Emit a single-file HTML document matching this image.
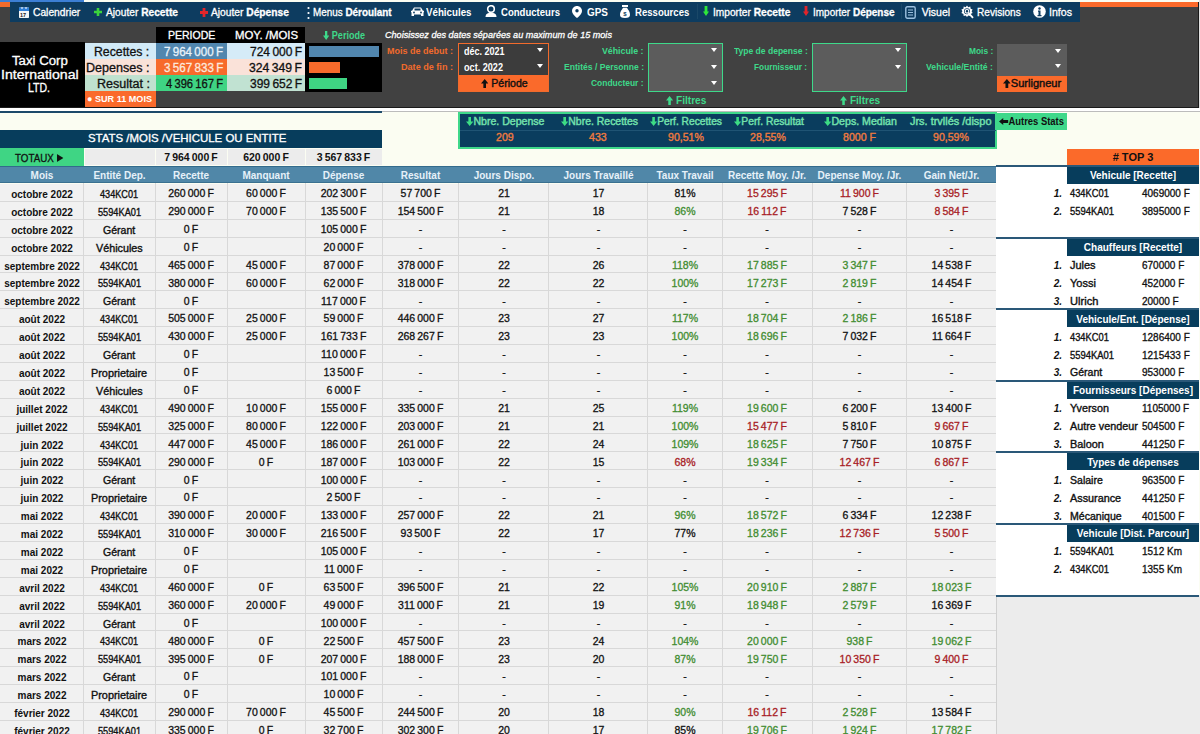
<!DOCTYPE html><html><head><meta charset="utf-8"><style>*{margin:0;padding:0;box-sizing:border-box}
html,body{width:1200px;height:734px;overflow:hidden}
body{position:relative;background:#fbfdf2;font-family:"Liberation Sans",sans-serif}
.a{position:absolute}
.t{position:absolute;white-space:nowrap}
</style></head><body>
<div class="a" style="left:0px;top:0px;width:84px;height:2px;background:#3c7fd4;"></div>
<div class="a" style="left:0px;top:2px;width:1199px;height:106px;background:#414141;"></div>
<div class="a" style="left:0px;top:2px;width:10px;height:5px;background:#f26b2c;"></div>
<div class="a" style="left:1080px;top:2px;width:119px;height:5px;background:#fb6a2a;"></div>
<div class="a" style="left:1199px;top:0px;width:1px;height:110px;background:#e0e0e0;"></div>
<div class="a" style="left:10px;top:1.5px;width:1070px;height:20px;background:#0d3c60;"></div>
<svg class="a" style="left:19px;top:7px" width="10" height="11" viewBox="0 0 10 11"><rect x="0" y="0.5" width="10" height="10.5" rx="0.8" fill="#f4f6f8"/><rect x="0" y="0.5" width="10" height="3.5" fill="#2f7fd8"/><rect x="2.5" y="0" width="1" height="2" fill="#fff"/><rect x="6.5" y="0" width="1" height="2" fill="#fff"/><text x="1" y="10" font-size="5.5" font-family="Liberation Sans" font-weight="bold" fill="#222">17</text></svg>
<svg class="a" style="left:94px;top:8px" width="8" height="8" viewBox="0 0 8 8"><path d="M2.7 0h2.6v2.7H8v2.6H5.3V8H2.7V5.3H0V2.7h2.7z" fill="#3bd43c"/></svg>
<svg class="a" style="left:200px;top:8px" width="8" height="9" viewBox="0 0 8 9"><path d="M2.6 0h2.8v3.1H8v2.8H5.4V9H2.6V5.9H0V3.1h2.6z" fill="#e2262b"/></svg>
<svg class="a" style="left:307px;top:6px" width="3" height="14" viewBox="0 0 3 14"><circle cx="1.5" cy="2" r="1.1" fill="#fff"/><circle cx="1.5" cy="7" r="1.1" fill="#fff"/><circle cx="1.5" cy="12" r="1.1" fill="#fff"/></svg>
<svg class="a" style="left:411px;top:7px" width="13" height="9" viewBox="0 0 13 9"><path d="M3 0.5h7l2 3.2h1v1.5h-0.5V9h-2.5V7.5H3V9H0.5V5.2H0V3.7h1z" fill="#fff"/><rect x="3.5" y="1.5" width="6" height="2" fill="#0d3c60"/><circle cx="3" cy="5.5" r="0.9" fill="#0d3c60"/><circle cx="10" cy="5.5" r="0.9" fill="#0d3c60"/></svg>
<svg class="a" style="left:485px;top:5px" width="12" height="12" viewBox="0 0 12 12"><circle cx="6" cy="4" r="3.3" fill="none" stroke="#fff" stroke-width="1.6"/><path d="M0.5 12c0-3.2 2.3-4.3 5.5-4.3s5.5 1.1 5.5 4.3z" fill="#fff"/></svg>
<svg class="a" style="left:572px;top:6px" width="10" height="12" viewBox="0 0 10 12"><path d="M5 0C2.2 0 0 2.2 0 5c0 3.5 5 7 5 7s5-3.5 5-7C10 2.2 7.8 0 5 0z" fill="#fff"/><circle cx="5" cy="4.8" r="1.7" fill="#0d3c60"/></svg>
<svg class="a" style="left:620px;top:5px" width="10" height="13" viewBox="0 0 10 13"><rect x="2" y="0" width="6" height="2" fill="#fff"/><path d="M3 2.8h4l1 1.6C9.5 6 10 8 10 10c0 2-1.5 3-5 3S0 12 0 10c0-2 .5-4 2-5.6z" fill="#fff"/><text x="3.3" y="11" font-size="6" font-family="Liberation Sans" font-weight="bold" fill="#0d3c60">$</text></svg>
<div class="a" style="left:697px;top:4px;width:1px;height:15px;background:#1a4868;"></div>
<svg class="a" style="left:703px;top:6px" width="6" height="10" viewBox="0 0 6 10"><path d="M1.6 0h2.8v5.6H6L3 10 0 5.6h1.6z" fill="#2ee83a"/></svg>
<svg class="a" style="left:802.5px;top:6px" width="6" height="10" viewBox="0 0 6 10"><path d="M1.6 0h2.8v5.6H6L3 10 0 5.6h1.6z" fill="#e0242a"/></svg>
<div class="a" style="left:901px;top:4px;width:1px;height:15px;background:#1a4868;"></div>
<svg class="a" style="left:905px;top:6px" width="11" height="13" viewBox="0 0 11 13"><rect x="0.8" y="0.8" width="9.4" height="11.4" rx="1.5" fill="none" stroke="#9cc0de" stroke-width="1.4"/><path d="M3 4h5M3 6.5h5M3 9h5" stroke="#9cc0de" stroke-width="1"/></svg>
<svg class="a" style="left:960px;top:5px" width="14" height="14" viewBox="0 0 14 14"><path d="M7 0.5l1.3 1.7 2-.6.3 2.1 2 .8-1 1.8 1 1.8-2 .8-.3 2.1-2-.6L7 12.1 5.7 10.4l-2 .6-.3-2.1-2-.8 1-1.8-1-1.8 2-.8.3-2.1 2 .6z" fill="#fff"/><circle cx="7" cy="6.3" r="3" fill="#0d3c60"/><circle cx="7" cy="6.3" r="1.8" fill="none" stroke="#fff" stroke-width="1.1"/><path d="M8.5 7.8l4.5 5" stroke="#fff" stroke-width="1.8"/></svg>
<svg class="a" style="left:1033px;top:5px" width="13" height="13" viewBox="0 0 13 13"><circle cx="6.5" cy="6.5" r="6.3" fill="#fff"/><circle cx="6.5" cy="3.5" r="1.2" fill="#0d3c60"/><path d="M5 5.5h2.5v4.5H8.5v1.2h-4V10h1V6.7H5z" fill="#0d3c60"/></svg>
<div class="a" style="left:0px;top:42px;width:85px;height:66px;background:#000;"></div>
<div class="a" style="left:85px;top:43px;width:71px;height:16px;background:#d2eaf7;"></div>
<div class="a" style="left:85px;top:59px;width:71px;height:16px;background:#f9e2d8;"></div>
<div class="a" style="left:85px;top:75px;width:71px;height:16px;background:#bfe1cf;"></div>
<div class="a" style="left:85px;top:91px;width:71px;height:17px;background:#fa6a2b;"></div>
<div class="a" style="left:156px;top:27px;width:149px;height:16px;background:#000;"></div>
<div class="a" style="left:156px;top:43px;width:71px;height:16px;background:#5186ae;"></div>
<div class="a" style="left:227px;top:43px;width:78px;height:16px;background:#d5ebf8;"></div>
<div class="a" style="left:156px;top:59px;width:71px;height:16px;background:#f76a2b;"></div>
<div class="a" style="left:227px;top:59px;width:78px;height:16px;background:#fae2d9;"></div>
<div class="a" style="left:156px;top:75px;width:71px;height:16px;background:#3fd483;"></div>
<div class="a" style="left:227px;top:75px;width:78px;height:16px;background:#c1e2d2;"></div>
<div class="a" style="left:305px;top:43px;width:77px;height:49px;background:#000;"></div>
<div class="a" style="left:309px;top:46px;width:70px;height:11px;background:#5186ae;"></div>
<div class="a" style="left:309px;top:62px;width:31px;height:11px;background:#f76a2b;"></div>
<div class="a" style="left:309px;top:78px;width:38px;height:11px;background:#3fd483;"></div>
<div class="a" style="left:458px;top:43px;width:91px;height:49px;background:#3c3c3c;border:1px solid #f26b2c"></div>
<div class="a" style="left:536.5px;top:48px;width:0;height:0;border-left:3.5px solid transparent;border-right:3.5px solid transparent;border-top:4.5px solid #fff"></div>
<div class="a" style="left:536.5px;top:64px;width:0;height:0;border-left:3.5px solid transparent;border-right:3.5px solid transparent;border-top:4.5px solid #fff"></div>
<div class="a" style="left:459px;top:75px;width:89px;height:16px;background:#fa6a2b;"></div>
<div class="a" style="left:648px;top:43px;width:75px;height:49px;background:#5c5c5c;border:1px solid #3ed98a"></div>
<div class="a" style="left:710.5px;top:48px;width:0;height:0;border-left:3.5px solid transparent;border-right:3.5px solid transparent;border-top:4.5px solid #fff"></div>
<div class="a" style="left:710.5px;top:64.5px;width:0;height:0;border-left:3.5px solid transparent;border-right:3.5px solid transparent;border-top:4.5px solid #fff"></div>
<div class="a" style="left:710.5px;top:81px;width:0;height:0;border-left:3.5px solid transparent;border-right:3.5px solid transparent;border-top:4.5px solid #fff"></div>
<div class="a" style="left:812px;top:43px;width:95px;height:49px;background:#5c5c5c;border:1px solid #3ed98a"></div>
<div class="a" style="left:894.5px;top:48px;width:0;height:0;border-left:3.5px solid transparent;border-right:3.5px solid transparent;border-top:4.5px solid #fff"></div>
<div class="a" style="left:894.5px;top:64.5px;width:0;height:0;border-left:3.5px solid transparent;border-right:3.5px solid transparent;border-top:4.5px solid #fff"></div>
<div class="a" style="left:997px;top:44px;width:70px;height:32px;background:#5c5c5c;"></div>
<div class="a" style="left:1054.5px;top:48.5px;width:0;height:0;border-left:3.5px solid transparent;border-right:3.5px solid transparent;border-top:4.5px solid #fff"></div>
<div class="a" style="left:1054.5px;top:64.3px;width:0;height:0;border-left:3.5px solid transparent;border-right:3.5px solid transparent;border-top:4.5px solid #fff"></div>
<div class="a" style="left:997px;top:76px;width:70px;height:16px;background:#fa6a2b;"></div>
<div class="a" style="left:0px;top:107px;width:1199px;height:1px;background:#1a1a1a;"></div>
<div class="a" style="left:1198px;top:2px;width:1px;height:106px;background:#1a1a1a;"></div>
<div class="a" style="left:0px;top:108px;width:1200px;height:2.5px;background:#ffffff;"></div>
<div class="a" style="left:382px;top:110.5px;width:818px;height:1.5px;background:#bcbcbc;"></div>
<div class="a" style="left:0px;top:111px;width:382px;height:1.8px;background:#1c4a6a;"></div>
<div class="a" style="left:458px;top:112px;width:539px;height:36.5px;background:#0a3d5e;border:2px solid #3fd88a"></div>
<div class="a" style="left:460px;top:129.5px;width:536px;height:1px;background:#1f5474;"></div>
<div class="a" style="left:997px;top:112.5px;width:70px;height:17px;background:#3fd88a;"></div>
<div class="a" style="left:0px;top:130px;width:382px;height:18px;background:#073d5c;"></div>
<div class="a" style="left:0px;top:148px;width:84px;height:18px;background:#3fd584;"></div>
<div class="a" style="left:85px;top:149px;width:70px;height:16px;background:#ececec;"></div>
<div class="a" style="left:156px;top:149px;width:71px;height:16px;background:#ececec;"></div>
<div class="a" style="left:228px;top:149px;width:77px;height:16px;background:#ececec;"></div>
<div class="a" style="left:306px;top:149px;width:76px;height:16px;background:#ececec;"></div>
<div class="a" style="left:0px;top:166px;width:996px;height:17px;background:#5087a8;"></div>
<div class="a" style="left:0px;top:166px;width:996px;height:1px;background:#336b8c;"></div>
<div class="a" style="left:0px;top:182px;width:996px;height:1px;background:#3a7090;"></div>
<div class="a" style="left:0px;top:184px;width:996px;height:18px;background:#f1f1f1;"></div>
<div class="a" style="left:0px;top:201px;width:996px;height:1px;background:#d8d8d8;"></div>
<div class="a" style="left:0px;top:202px;width:996px;height:18px;background:#f1f1f1;"></div>
<div class="a" style="left:0px;top:219px;width:996px;height:1px;background:#d8d8d8;"></div>
<div class="a" style="left:0px;top:220px;width:996px;height:18px;background:#f1f1f1;"></div>
<div class="a" style="left:0px;top:237px;width:996px;height:1px;background:#d8d8d8;"></div>
<div class="a" style="left:0px;top:238px;width:996px;height:18px;background:#f1f1f1;"></div>
<div class="a" style="left:0px;top:255px;width:996px;height:1px;background:#d8d8d8;"></div>
<div class="a" style="left:0px;top:256px;width:996px;height:17px;background:#f1f1f1;"></div>
<div class="a" style="left:0px;top:272px;width:996px;height:1px;background:#d8d8d8;"></div>
<div class="a" style="left:0px;top:273px;width:996px;height:18px;background:#f1f1f1;"></div>
<div class="a" style="left:0px;top:290px;width:996px;height:1px;background:#d8d8d8;"></div>
<div class="a" style="left:0px;top:291px;width:996px;height:18px;background:#f1f1f1;"></div>
<div class="a" style="left:0px;top:308px;width:996px;height:1px;background:#d8d8d8;"></div>
<div class="a" style="left:0px;top:309px;width:996px;height:18px;background:#f1f1f1;"></div>
<div class="a" style="left:0px;top:326px;width:996px;height:1px;background:#d8d8d8;"></div>
<div class="a" style="left:0px;top:327px;width:996px;height:18px;background:#f1f1f1;"></div>
<div class="a" style="left:0px;top:344px;width:996px;height:1px;background:#d8d8d8;"></div>
<div class="a" style="left:0px;top:345px;width:996px;height:18px;background:#f1f1f1;"></div>
<div class="a" style="left:0px;top:362px;width:996px;height:1px;background:#d8d8d8;"></div>
<div class="a" style="left:0px;top:363px;width:996px;height:18px;background:#f1f1f1;"></div>
<div class="a" style="left:0px;top:380px;width:996px;height:1px;background:#d8d8d8;"></div>
<div class="a" style="left:0px;top:381px;width:996px;height:18px;background:#f1f1f1;"></div>
<div class="a" style="left:0px;top:398px;width:996px;height:1px;background:#d8d8d8;"></div>
<div class="a" style="left:0px;top:399px;width:996px;height:18px;background:#f1f1f1;"></div>
<div class="a" style="left:0px;top:416px;width:996px;height:1px;background:#d8d8d8;"></div>
<div class="a" style="left:0px;top:417px;width:996px;height:17px;background:#f1f1f1;"></div>
<div class="a" style="left:0px;top:433px;width:996px;height:1px;background:#d8d8d8;"></div>
<div class="a" style="left:0px;top:434px;width:996px;height:18px;background:#f1f1f1;"></div>
<div class="a" style="left:0px;top:451px;width:996px;height:1px;background:#d8d8d8;"></div>
<div class="a" style="left:0px;top:452px;width:996px;height:18px;background:#f1f1f1;"></div>
<div class="a" style="left:0px;top:469px;width:996px;height:1px;background:#d8d8d8;"></div>
<div class="a" style="left:0px;top:470px;width:996px;height:18px;background:#f1f1f1;"></div>
<div class="a" style="left:0px;top:487px;width:996px;height:1px;background:#d8d8d8;"></div>
<div class="a" style="left:0px;top:488px;width:996px;height:18px;background:#f1f1f1;"></div>
<div class="a" style="left:0px;top:505px;width:996px;height:1px;background:#d8d8d8;"></div>
<div class="a" style="left:0px;top:506px;width:996px;height:18px;background:#f1f1f1;"></div>
<div class="a" style="left:0px;top:523px;width:996px;height:1px;background:#d8d8d8;"></div>
<div class="a" style="left:0px;top:524px;width:996px;height:18px;background:#f1f1f1;"></div>
<div class="a" style="left:0px;top:541px;width:996px;height:1px;background:#d8d8d8;"></div>
<div class="a" style="left:0px;top:542px;width:996px;height:18px;background:#f1f1f1;"></div>
<div class="a" style="left:0px;top:559px;width:996px;height:1px;background:#d8d8d8;"></div>
<div class="a" style="left:0px;top:560px;width:996px;height:18px;background:#f1f1f1;"></div>
<div class="a" style="left:0px;top:577px;width:996px;height:1px;background:#d8d8d8;"></div>
<div class="a" style="left:0px;top:578px;width:996px;height:18px;background:#f1f1f1;"></div>
<div class="a" style="left:0px;top:595px;width:996px;height:1px;background:#d8d8d8;"></div>
<div class="a" style="left:0px;top:596px;width:996px;height:18px;background:#f1f1f1;"></div>
<div class="a" style="left:0px;top:613px;width:996px;height:1px;background:#d8d8d8;"></div>
<div class="a" style="left:0px;top:614px;width:996px;height:17px;background:#f1f1f1;"></div>
<div class="a" style="left:0px;top:630px;width:996px;height:1px;background:#d8d8d8;"></div>
<div class="a" style="left:0px;top:631px;width:996px;height:18px;background:#f1f1f1;"></div>
<div class="a" style="left:0px;top:648px;width:996px;height:1px;background:#d8d8d8;"></div>
<div class="a" style="left:0px;top:649px;width:996px;height:18px;background:#f1f1f1;"></div>
<div class="a" style="left:0px;top:666px;width:996px;height:1px;background:#d8d8d8;"></div>
<div class="a" style="left:0px;top:667px;width:996px;height:18px;background:#f1f1f1;"></div>
<div class="a" style="left:0px;top:684px;width:996px;height:1px;background:#d8d8d8;"></div>
<div class="a" style="left:0px;top:685px;width:996px;height:18px;background:#f1f1f1;"></div>
<div class="a" style="left:0px;top:702px;width:996px;height:1px;background:#d8d8d8;"></div>
<div class="a" style="left:0px;top:703px;width:996px;height:18px;background:#f1f1f1;"></div>
<div class="a" style="left:0px;top:720px;width:996px;height:1px;background:#d8d8d8;"></div>
<div class="a" style="left:0px;top:721px;width:996px;height:18px;background:#f1f1f1;"></div>
<div class="a" style="left:0px;top:738px;width:996px;height:1px;background:#d8d8d8;"></div>
<div class="a" style="left:83px;top:183px;width:1px;height:551px;background:#d8d8d8;"></div>
<div class="a" style="left:155px;top:183px;width:1px;height:551px;background:#d8d8d8;"></div>
<div class="a" style="left:227px;top:183px;width:1px;height:551px;background:#d8d8d8;"></div>
<div class="a" style="left:305px;top:183px;width:1px;height:551px;background:#d8d8d8;"></div>
<div class="a" style="left:382px;top:183px;width:1px;height:551px;background:#d8d8d8;"></div>
<div class="a" style="left:458px;top:183px;width:1px;height:551px;background:#d8d8d8;"></div>
<div class="a" style="left:548px;top:183px;width:1px;height:551px;background:#d8d8d8;"></div>
<div class="a" style="left:647px;top:183px;width:1px;height:551px;background:#d8d8d8;"></div>
<div class="a" style="left:722px;top:183px;width:1px;height:551px;background:#d8d8d8;"></div>
<div class="a" style="left:812px;top:183px;width:1px;height:551px;background:#d8d8d8;"></div>
<div class="a" style="left:906px;top:183px;width:1px;height:551px;background:#d8d8d8;"></div>
<div class="a" style="left:996px;top:166px;width:203px;height:429px;background:#fff;"></div>
<div class="a" style="left:996px;top:595px;width:204px;height:139px;background:#ececec;"></div>
<div class="a" style="left:996px;top:595px;width:1px;height:139px;background:#d0d0d0;"></div>
<div class="a" style="left:1067px;top:148.5px;width:132px;height:17.5px;background:#fb6a2a;"></div>
<div class="a" style="left:996px;top:165px;width:203px;height:1.5px;background:#2a5878;"></div>
<div class="a" style="left:1067px;top:167px;width:132px;height:17px;background:#073d5c;"></div>
<div class="a" style="left:996px;top:237px;width:203px;height:1.5px;background:#2a5878;"></div>
<div class="a" style="left:1067px;top:239px;width:132px;height:17px;background:#073d5c;"></div>
<div class="a" style="left:996px;top:308px;width:203px;height:1.5px;background:#2a5878;"></div>
<div class="a" style="left:1067px;top:310px;width:132px;height:17px;background:#073d5c;"></div>
<div class="a" style="left:996px;top:380px;width:203px;height:1.5px;background:#2a5878;"></div>
<div class="a" style="left:1067px;top:382px;width:132px;height:17px;background:#073d5c;"></div>
<div class="a" style="left:996px;top:451px;width:203px;height:1.5px;background:#2a5878;"></div>
<div class="a" style="left:1067px;top:453px;width:132px;height:17px;background:#073d5c;"></div>
<div class="a" style="left:996px;top:523px;width:203px;height:1.5px;background:#2a5878;"></div>
<div class="a" style="left:1067px;top:525px;width:132px;height:17px;background:#073d5c;"></div>
<div class="a" style="left:996px;top:595px;width:203px;height:2px;background:#2a5878;"></div>
<div class="t" style="left:33.40px;top:6.32px;font-size:10.5px;line-height:12.07px;color:#fff;-webkit-text-stroke:0.3px #fff;transform:scaleX(0.976);transform-origin:0 0;">Calendrier</div>
<div class="t" style="left:106.00px;top:6.32px;font-size:10.5px;line-height:12.07px;color:#fff;-webkit-text-stroke:0.3px #fff;transform:scaleX(0.971);transform-origin:0 0;">Ajouter <b>Recette</b></div>
<div class="t" style="left:211.00px;top:6.32px;font-size:10.5px;line-height:12.07px;color:#fff;-webkit-text-stroke:0.3px #fff;transform:scaleX(0.975);transform-origin:0 0;">Ajouter <b>Dépense</b></div>
<div class="t" style="left:312.50px;top:6.32px;font-size:10.5px;line-height:12.07px;color:#fff;-webkit-text-stroke:0.3px #fff;transform:scaleX(0.941);transform-origin:0 0;">Menus <b>Déroulant</b></div>
<div class="t" style="left:425.80px;top:6.32px;font-size:10.5px;line-height:12.07px;color:#fff;font-weight:bold;transform:scaleX(0.928);transform-origin:0 0;">Véhicules</div>
<div class="t" style="left:501.00px;top:6.32px;font-size:10.5px;line-height:12.07px;color:#fff;font-weight:bold;transform:scaleX(0.911);transform-origin:0 0;">Conducteurs</div>
<div class="t" style="left:586.70px;top:6.32px;font-size:10.5px;line-height:12.07px;color:#fff;font-weight:bold;transform:scaleX(0.946);transform-origin:0 0;">GPS</div>
<div class="t" style="left:635.00px;top:6.32px;font-size:10.5px;line-height:12.07px;color:#fff;font-weight:bold;transform:scaleX(0.912);transform-origin:0 0;">Ressources</div>
<div class="t" style="left:713.30px;top:6.32px;font-size:10.5px;line-height:12.07px;color:#fff;-webkit-text-stroke:0.3px #fff;transform:scaleX(0.968);transform-origin:0 0;">Importer <b>Recette</b></div>
<div class="t" style="left:812.70px;top:6.32px;font-size:10.5px;line-height:12.07px;color:#fff;-webkit-text-stroke:0.3px #fff;transform:scaleX(0.951);transform-origin:0 0;">Importer <b>Dépense</b></div>
<div class="t" style="left:921.70px;top:6.32px;font-size:10.5px;line-height:12.07px;color:#fff;-webkit-text-stroke:0.3px #fff;">Visuel</div>
<div class="t" style="left:977.30px;top:6.32px;font-size:10.5px;line-height:12.07px;color:#fff;-webkit-text-stroke:0.3px #fff;transform:scaleX(0.960);transform-origin:0 0;">Revisions</div>
<div class="t" style="left:1049.30px;top:6.32px;font-size:10.5px;line-height:12.07px;color:#fff;-webkit-text-stroke:0.3px #fff;transform:scaleX(1.010);transform-origin:0 0;">Infos</div>
<div class="t" style="left:11.60px;top:54.94px;font-size:12px;line-height:13.80px;color:#fff;-webkit-text-stroke:0.3px #fff;transform:scaleX(1.101);transform-origin:0 0;">Taxi Corp</div>
<div class="t" style="left:0.70px;top:68.94px;font-size:12px;line-height:13.80px;color:#fff;-webkit-text-stroke:0.3px #fff;transform:scaleX(1.175);transform-origin:0 0;">International</div>
<div class="t" style="left:28.00px;top:81.94px;font-size:12px;line-height:13.80px;color:#fff;-webkit-text-stroke:0.3px #fff;transform:scaleX(0.876);transform-origin:0 0;">LTD.</div>
<div class="t" style="left:94.00px;top:45.94px;font-size:12px;line-height:13.80px;color:#111;-webkit-text-stroke:0.3px #111;transform:scaleX(1.022);transform-origin:0 0;">Recettes :</div>
<div class="t" style="left:86.00px;top:61.94px;font-size:12px;line-height:13.80px;color:#111;-webkit-text-stroke:0.3px #111;transform:scaleX(1.046);transform-origin:0 0;">Depenses :</div>
<div class="t" style="left:96.50px;top:77.94px;font-size:12px;line-height:13.80px;color:#111;-webkit-text-stroke:0.3px #111;transform:scaleX(1.045);transform-origin:0 0;">Resultat :</div>
<div class="t" style="left:87.00px;top:94.25px;font-size:9.5px;line-height:10.92px;color:#fff;font-weight:bold;transform:scaleX(0.955);transform-origin:0 0;">● SUR 11 MOIS</div>
<div class="t" style="left:168.00px;top:29.32px;font-size:10.5px;line-height:12.07px;color:#fff;-webkit-text-stroke:0.3px #fff;">PERIODE</div>
<div class="t" style="left:235.00px;top:29.32px;font-size:10.5px;line-height:12.07px;color:#fff;-webkit-text-stroke:0.3px #fff;transform:scaleX(1.083);transform-origin:0 0;">MOY. /MOIS</div>
<div class="t" style="left:164.00px;top:45.94px;font-size:12px;line-height:13.80px;color:#e8f2fa;-webkit-text-stroke:0.3px #e8f2fa;transform:scaleX(0.963);transform-origin:0 0;">7 964 000 F</div>
<div class="t" style="left:250.00px;top:45.94px;font-size:12px;line-height:13.80px;color:#111;-webkit-text-stroke:0.3px #111;">724 000 F</div>
<div class="t" style="left:163.60px;top:61.94px;font-size:12px;line-height:13.80px;color:#fde8dc;-webkit-text-stroke:0.3px #fde8dc;transform:scaleX(0.970);transform-origin:0 0;">3 567 833 F</div>
<div class="t" style="left:249.00px;top:61.94px;font-size:12px;line-height:13.80px;color:#111;-webkit-text-stroke:0.3px #111;transform:scaleX(1.016);transform-origin:0 0;">324 349 F</div>
<div class="t" style="left:166.00px;top:77.94px;font-size:12px;line-height:13.80px;color:#111;-webkit-text-stroke:0.3px #111;transform:scaleX(0.930);transform-origin:0 0;">4 396 167 F</div>
<div class="t" style="left:250.00px;top:77.94px;font-size:12px;line-height:13.80px;color:#111;-webkit-text-stroke:0.3px #111;">399 652 F</div>
<div class="t" style="left:323.00px;top:29.79px;font-size:10px;line-height:11.50px;color:#3ed98a;font-weight:bold;transform:scaleX(0.904);transform-origin:0 0;"><svg width="7" height="9" viewBox="0 0 7 9" style="vertical-align:-1px"><path d="M2.24 0h2.52v4.50H7L3.50 9L0 4.50h2.24z" fill="#3ed98a"/></svg> Periode</div>
<div class="t" style="left:385.00px;top:30.25px;font-size:9.5px;line-height:10.92px;color:#fff;-webkit-text-stroke:0.3px #fff;font-style:italic;transform:scaleX(0.955);transform-origin:0 0;">Choisissez des dates séparées au maximum de 15 mois</div>
<div class="t" style="left:387.00px;top:46.25px;font-size:9.5px;line-height:10.92px;color:#f26b2c;font-weight:bold;transform:scaleX(0.947);transform-origin:0 0;">Mois de debut :</div>
<div class="t" style="left:401.00px;top:62.25px;font-size:9.5px;line-height:10.92px;color:#f26b2c;font-weight:bold;transform:scaleX(0.956);transform-origin:0 0;">Date de fin :</div>
<div class="t" style="left:464.00px;top:45.78px;font-size:10px;line-height:11.50px;color:#fff;font-weight:bold;transform:scaleX(0.901);transform-origin:0 0;">déc. 2021</div>
<div class="t" style="left:464.00px;top:61.78px;font-size:10px;line-height:11.50px;color:#fff;font-weight:bold;transform:scaleX(0.911);transform-origin:0 0;">oct. 2022</div>
<div class="t" style="left:480.60px;top:77.78px;font-size:10px;line-height:11.50px;color:#111;-webkit-text-stroke:0.4px #111;transform:scaleX(1.055);transform-origin:0 0;"><svg width="7" height="9" viewBox="0 0 7 9" style="vertical-align:-1px"><path d="M2.24 9h2.52v-4.50H7L3.50 0L0 4.50h2.24z" fill="#111"/></svg> Période</div>
<div class="t" style="left:602.00px;top:46.25px;font-size:9.5px;line-height:10.92px;color:#3ed98a;font-weight:bold;transform:scaleX(0.925);transform-origin:0 0;">Véhicule :</div>
<div class="t" style="left:563.60px;top:62.25px;font-size:9.5px;line-height:10.92px;color:#3ed98a;font-weight:bold;transform:scaleX(0.902);transform-origin:0 0;">Entités / Personne :</div>
<div class="t" style="left:591.00px;top:78.25px;font-size:9.5px;line-height:10.92px;color:#3ed98a;font-weight:bold;transform:scaleX(0.888);transform-origin:0 0;">Conducteur :</div>
<div class="t" style="left:665.60px;top:94.78px;font-size:10px;line-height:11.50px;color:#3ed98a;font-weight:bold;transform:scaleX(1.015);transform-origin:0 0;"><svg width="7" height="9" viewBox="0 0 7 9" style="vertical-align:-1px"><path d="M2.24 9h2.52v-4.50H7L3.50 0L0 4.50h2.24z" fill="#3ed98a"/></svg> Filtres</div>
<div class="t" style="left:733.60px;top:46.25px;font-size:9.5px;line-height:10.92px;color:#3ed98a;font-weight:bold;transform:scaleX(0.897);transform-origin:0 0;">Type de depense :</div>
<div class="t" style="left:754.00px;top:62.25px;font-size:9.5px;line-height:10.92px;color:#3ed98a;font-weight:bold;transform:scaleX(0.873);transform-origin:0 0;">Fournisseur :</div>
<div class="t" style="left:839.80px;top:94.78px;font-size:10px;line-height:11.50px;color:#3ed98a;font-weight:bold;transform:scaleX(1.010);transform-origin:0 0;"><svg width="7" height="9" viewBox="0 0 7 9" style="vertical-align:-1px"><path d="M2.24 9h2.52v-4.50H7L3.50 0L0 4.50h2.24z" fill="#3ed98a"/></svg> Filtres</div>
<div class="t" style="left:968.80px;top:46.25px;font-size:9.5px;line-height:10.92px;color:#3ed98a;font-weight:bold;transform:scaleX(0.882);transform-origin:0 0;">Mois :</div>
<div class="t" style="left:926.00px;top:62.25px;font-size:9.5px;line-height:10.92px;color:#3ed98a;font-weight:bold;transform:scaleX(0.913);transform-origin:0 0;">Vehicule/Entité :</div>
<div class="t" style="left:1003.00px;top:77.78px;font-size:10px;line-height:11.50px;color:#111;-webkit-text-stroke:0.4px #111;transform:scaleX(1.107);transform-origin:0 0;"><svg width="7" height="9" viewBox="0 0 7 9" style="vertical-align:-1px"><path d="M2.24 9h2.52v-4.50H7L3.50 0L0 4.50h2.24z" fill="#111"/></svg>Surligneur</div>
<div class="t" style="left:466.00px;top:115.78px;font-size:10px;line-height:11.50px;color:#74e2ad;-webkit-text-stroke:0.4px #74e2ad;transform:scaleX(1.057);transform-origin:0 0;"><svg width="7" height="9" viewBox="0 0 7 9" style="vertical-align:-1px"><path d="M2.24 0h2.52v4.50H7L3.50 9L0 4.50h2.24z" fill="#3ddc84"/></svg>Nbre. Depense</div>
<div class="t" style="left:496.17px;top:131.40px;font-size:11.5px;line-height:13.22px;color:#ee7a3e;-webkit-text-stroke:0.4px #ee7a3e;transform:scaleX(0.920);transform-origin:0 0;">209</div>
<div class="t" style="left:560.80px;top:115.78px;font-size:10px;line-height:11.50px;color:#74e2ad;-webkit-text-stroke:0.4px #74e2ad;transform:scaleX(1.045);transform-origin:0 0;"><svg width="7" height="9" viewBox="0 0 7 9" style="vertical-align:-1px"><path d="M2.24 0h2.52v4.50H7L3.50 9L0 4.50h2.24z" fill="#3ddc84"/></svg>Nbre. Recettes</div>
<div class="t" style="left:589.17px;top:131.40px;font-size:11.5px;line-height:13.22px;color:#ee7a3e;-webkit-text-stroke:0.4px #ee7a3e;transform:scaleX(0.920);transform-origin:0 0;">433</div>
<div class="t" style="left:650.00px;top:115.78px;font-size:10px;line-height:11.50px;color:#74e2ad;-webkit-text-stroke:0.4px #74e2ad;transform:scaleX(1.023);transform-origin:0 0;"><svg width="7" height="9" viewBox="0 0 7 9" style="vertical-align:-1px"><path d="M2.24 0h2.52v4.50H7L3.50 9L0 4.50h2.24z" fill="#3ddc84"/></svg>Perf. Recettes</div>
<div class="t" style="left:667.65px;top:131.40px;font-size:11.5px;line-height:13.22px;color:#ee7a3e;-webkit-text-stroke:0.4px #ee7a3e;transform:scaleX(0.920);transform-origin:0 0;">90,51%</div>
<div class="t" style="left:733.50px;top:115.78px;font-size:10px;line-height:11.50px;color:#74e2ad;-webkit-text-stroke:0.4px #74e2ad;transform:scaleX(1.034);transform-origin:0 0;"><svg width="7" height="9" viewBox="0 0 7 9" style="vertical-align:-1px"><path d="M2.24 0h2.52v4.50H7L3.50 9L0 4.50h2.24z" fill="#3ddc84"/></svg>Perf. Resultat</div>
<div class="t" style="left:750.05px;top:131.40px;font-size:11.5px;line-height:13.22px;color:#ee7a3e;-webkit-text-stroke:0.4px #ee7a3e;transform:scaleX(0.920);transform-origin:0 0;">28,55%</div>
<div class="t" style="left:823.50px;top:115.78px;font-size:10px;line-height:11.50px;color:#74e2ad;-webkit-text-stroke:0.4px #74e2ad;transform:scaleX(1.061);transform-origin:0 0;"><svg width="7" height="9" viewBox="0 0 7 9" style="vertical-align:-1px"><path d="M2.24 0h2.52v4.50H7L3.50 9L0 4.50h2.24z" fill="#3ddc84"/></svg>Deps. Median</div>
<div class="t" style="left:843.03px;top:131.40px;font-size:11.5px;line-height:13.22px;color:#ee7a3e;-webkit-text-stroke:0.4px #ee7a3e;transform:scaleX(0.920);transform-origin:0 0;">8000 F</div>
<div class="t" style="left:910.00px;top:115.78px;font-size:10px;line-height:11.50px;color:#74e2ad;-webkit-text-stroke:0.4px #74e2ad;transform:scaleX(1.094);transform-origin:0 0;">Jrs. trvllés /dispo</div>
<div class="t" style="left:933.05px;top:131.40px;font-size:11.5px;line-height:13.22px;color:#ee7a3e;-webkit-text-stroke:0.4px #ee7a3e;transform:scaleX(0.920);transform-origin:0 0;">90,59%</div>
<div class="t" style="left:999.00px;top:115.78px;font-size:10px;line-height:11.50px;color:#111;font-weight:bold;transform:scaleX(0.943);transform-origin:0 0;"><svg width="10" height="7" viewBox="0 0 10 7" style="vertical-align:0px"><path d="M0 3.50L4.50 0v2.10H10v2.80H4.50V7z" fill="#111"/></svg>Autres Stats</div>
<div class="t" style="left:88.30px;top:131.86px;font-size:11px;line-height:12.65px;color:#fff;-webkit-text-stroke:0.3px #fff;transform:scaleX(1.039);transform-origin:0 0;">STATS /MOIS /VEHICULE OU ENTITE</div>
<div class="t" style="left:15.00px;top:151.82px;font-size:10.5px;line-height:12.07px;color:#111;-webkit-text-stroke:0.3px #111;transform:scaleX(0.931);transform-origin:0 0;">TOTAUX <svg width="7" height="8" viewBox="0 0 7 8" style="vertical-align:-0.5px"><path d="M0 0L7 4.00L0 8z" fill="#111"/></svg></div>
<div class="t" style="left:164.20px;top:151.32px;font-size:10.5px;line-height:12.07px;color:#111;font-weight:bold;">7 964 000 F</div>
<div class="t" style="left:243.17px;top:151.32px;font-size:10.5px;line-height:12.07px;color:#111;font-weight:bold;">620 000 F</div>
<div class="t" style="left:316.70px;top:151.32px;font-size:10.5px;line-height:12.07px;color:#111;font-weight:bold;">3 567 833 F</div>
<div class="t" style="left:30.61px;top:170.28px;font-size:10px;line-height:11.50px;color:#e6f1f9;font-weight:bold;">Mois</div>
<div class="t" style="left:93.38px;top:170.28px;font-size:10px;line-height:11.50px;color:#e6f1f9;font-weight:bold;">Entité Dep.</div>
<div class="t" style="left:172.93px;top:170.28px;font-size:10px;line-height:11.50px;color:#e6f1f9;font-weight:bold;">Recette</div>
<div class="t" style="left:242.39px;top:170.28px;font-size:10px;line-height:11.50px;color:#e6f1f9;font-weight:bold;">Manquant</div>
<div class="t" style="left:322.66px;top:170.28px;font-size:10px;line-height:11.50px;color:#e6f1f9;font-weight:bold;">Dépense</div>
<div class="t" style="left:400.77px;top:170.28px;font-size:10px;line-height:11.50px;color:#e6f1f9;font-weight:bold;">Resultat</div>
<div class="t" style="left:473.71px;top:170.28px;font-size:10px;line-height:11.50px;color:#e6f1f9;font-weight:bold;">Jours Dispo.</div>
<div class="t" style="left:563.48px;top:170.28px;font-size:10px;line-height:11.50px;color:#e6f1f9;font-weight:bold;">Jours Travaillé</div>
<div class="t" style="left:656.46px;top:170.28px;font-size:10px;line-height:11.50px;color:#e6f1f9;font-weight:bold;">Taux Travail</div>
<div class="t" style="left:727.91px;top:170.28px;font-size:10px;line-height:11.50px;color:#e6f1f9;font-weight:bold;">Recette Moy. /Jr.</div>
<div class="t" style="left:817.62px;top:170.28px;font-size:10px;line-height:11.50px;color:#e6f1f9;font-weight:bold;">Depense Moy. /Jr.</div>
<div class="t" style="left:923.71px;top:170.28px;font-size:10px;line-height:11.50px;color:#e6f1f9;font-weight:bold;">Gain Net/Jr.</div>
<div class="t" style="left:11.15px;top:188.99px;font-size:10px;line-height:11.50px;color:#111;font-weight:bold;">octobre 2022</div>
<div class="t" style="left:100.48px;top:188.99px;font-size:10px;line-height:11.50px;color:#111;-webkit-text-stroke:0.35px #111;transform:scaleX(0.912);transform-origin:0 0;">434KC01</div>
<div class="t" style="left:168.17px;top:187.12px;font-size:10.5px;line-height:12.07px;color:#111;-webkit-text-stroke:0.3px #111;">260 000 F</div>
<div class="t" style="left:246.09px;top:187.12px;font-size:10.5px;line-height:12.07px;color:#111;-webkit-text-stroke:0.3px #111;">60 000 F</div>
<div class="t" style="left:320.67px;top:187.12px;font-size:10.5px;line-height:12.07px;color:#111;-webkit-text-stroke:0.3px #111;">202 300 F</div>
<div class="t" style="left:400.59px;top:187.12px;font-size:10.5px;line-height:12.07px;color:#111;-webkit-text-stroke:0.3px #111;">57 700 F</div>
<div class="t" style="left:498.16px;top:187.12px;font-size:10.5px;line-height:12.07px;color:#111;-webkit-text-stroke:0.3px #111;">21</div>
<div class="t" style="left:592.66px;top:187.12px;font-size:10.5px;line-height:12.07px;color:#111;-webkit-text-stroke:0.3px #111;">17</div>
<div class="t" style="left:674.49px;top:187.12px;font-size:10.5px;line-height:12.07px;color:#111;-webkit-text-stroke:0.3px #111;">81%</div>
<div class="t" style="left:747.09px;top:187.12px;font-size:10.5px;line-height:12.07px;color:#a81d26;-webkit-text-stroke:0.3px #a81d26;">15 295 F</div>
<div class="t" style="left:839.98px;top:187.12px;font-size:10.5px;line-height:12.07px;color:#a81d26;-webkit-text-stroke:0.3px #a81d26;">11 900 F</div>
<div class="t" style="left:934.51px;top:187.12px;font-size:10.5px;line-height:12.07px;color:#a81d26;-webkit-text-stroke:0.3px #a81d26;">3 395 F</div>
<div class="t" style="left:11.15px;top:206.89px;font-size:10px;line-height:11.50px;color:#111;font-weight:bold;">octobre 2022</div>
<div class="t" style="left:97.98px;top:206.89px;font-size:10px;line-height:11.50px;color:#111;-webkit-text-stroke:0.35px #111;transform:scaleX(0.921);transform-origin:0 0;">5594KA01</div>
<div class="t" style="left:168.17px;top:205.02px;font-size:10.5px;line-height:12.07px;color:#111;-webkit-text-stroke:0.3px #111;">290 000 F</div>
<div class="t" style="left:246.09px;top:205.02px;font-size:10.5px;line-height:12.07px;color:#111;-webkit-text-stroke:0.3px #111;">70 000 F</div>
<div class="t" style="left:320.67px;top:205.02px;font-size:10.5px;line-height:12.07px;color:#111;-webkit-text-stroke:0.3px #111;">135 500 F</div>
<div class="t" style="left:397.67px;top:205.02px;font-size:10.5px;line-height:12.07px;color:#111;-webkit-text-stroke:0.3px #111;">154 500 F</div>
<div class="t" style="left:498.16px;top:205.02px;font-size:10.5px;line-height:12.07px;color:#111;-webkit-text-stroke:0.3px #111;">21</div>
<div class="t" style="left:592.66px;top:205.02px;font-size:10.5px;line-height:12.07px;color:#111;-webkit-text-stroke:0.3px #111;">18</div>
<div class="t" style="left:674.49px;top:205.02px;font-size:10.5px;line-height:12.07px;color:#428d31;-webkit-text-stroke:0.3px #428d31;">86%</div>
<div class="t" style="left:747.48px;top:205.02px;font-size:10.5px;line-height:12.07px;color:#a81d26;-webkit-text-stroke:0.3px #a81d26;">16 112 F</div>
<div class="t" style="left:842.51px;top:205.02px;font-size:10.5px;line-height:12.07px;color:#111;-webkit-text-stroke:0.3px #111;">7 528 F</div>
<div class="t" style="left:934.51px;top:205.02px;font-size:10.5px;line-height:12.07px;color:#a81d26;-webkit-text-stroke:0.3px #a81d26;">8 584 F</div>
<div class="t" style="left:11.15px;top:224.78px;font-size:10px;line-height:11.50px;color:#111;font-weight:bold;">octobre 2022</div>
<div class="t" style="left:103.38px;top:224.78px;font-size:10px;line-height:11.50px;color:#111;-webkit-text-stroke:0.35px #111;transform:scaleX(1.054);transform-origin:0 0;">Gérant</div>
<div class="t" style="left:183.82px;top:222.92px;font-size:10.5px;line-height:12.07px;color:#111;-webkit-text-stroke:0.3px #111;">0 F</div>
<div class="t" style="left:320.67px;top:222.92px;font-size:10.5px;line-height:12.07px;color:#111;-webkit-text-stroke:0.3px #111;">105 000 F</div>
<div class="t" style="left:418.75px;top:222.92px;font-size:10.5px;line-height:12.07px;color:#111;-webkit-text-stroke:0.3px #111;">-</div>
<div class="t" style="left:502.25px;top:222.92px;font-size:10.5px;line-height:12.07px;color:#111;-webkit-text-stroke:0.3px #111;">-</div>
<div class="t" style="left:596.75px;top:222.92px;font-size:10.5px;line-height:12.07px;color:#111;-webkit-text-stroke:0.3px #111;">-</div>
<div class="t" style="left:683.25px;top:222.92px;font-size:10.5px;line-height:12.07px;color:#111;-webkit-text-stroke:0.3px #111;">-</div>
<div class="t" style="left:765.25px;top:222.92px;font-size:10.5px;line-height:12.07px;color:#111;-webkit-text-stroke:0.3px #111;">-</div>
<div class="t" style="left:857.75px;top:222.92px;font-size:10.5px;line-height:12.07px;color:#111;-webkit-text-stroke:0.3px #111;">-</div>
<div class="t" style="left:949.75px;top:222.92px;font-size:10.5px;line-height:12.07px;color:#111;-webkit-text-stroke:0.3px #111;">-</div>
<div class="t" style="left:11.15px;top:242.69px;font-size:10px;line-height:11.50px;color:#111;font-weight:bold;">octobre 2022</div>
<div class="t" style="left:96.15px;top:242.69px;font-size:10px;line-height:11.50px;color:#111;-webkit-text-stroke:0.35px #111;transform:scaleX(1.077);transform-origin:0 0;">Véhicules</div>
<div class="t" style="left:183.82px;top:240.82px;font-size:10.5px;line-height:12.07px;color:#111;-webkit-text-stroke:0.3px #111;">0 F</div>
<div class="t" style="left:323.59px;top:240.82px;font-size:10.5px;line-height:12.07px;color:#111;-webkit-text-stroke:0.3px #111;">20 000 F</div>
<div class="t" style="left:418.75px;top:240.82px;font-size:10.5px;line-height:12.07px;color:#111;-webkit-text-stroke:0.3px #111;">-</div>
<div class="t" style="left:502.25px;top:240.82px;font-size:10.5px;line-height:12.07px;color:#111;-webkit-text-stroke:0.3px #111;">-</div>
<div class="t" style="left:596.75px;top:240.82px;font-size:10.5px;line-height:12.07px;color:#111;-webkit-text-stroke:0.3px #111;">-</div>
<div class="t" style="left:683.25px;top:240.82px;font-size:10.5px;line-height:12.07px;color:#111;-webkit-text-stroke:0.3px #111;">-</div>
<div class="t" style="left:765.25px;top:240.82px;font-size:10.5px;line-height:12.07px;color:#111;-webkit-text-stroke:0.3px #111;">-</div>
<div class="t" style="left:857.75px;top:240.82px;font-size:10.5px;line-height:12.07px;color:#111;-webkit-text-stroke:0.3px #111;">-</div>
<div class="t" style="left:949.75px;top:240.82px;font-size:10.5px;line-height:12.07px;color:#111;-webkit-text-stroke:0.3px #111;">-</div>
<div class="t" style="left:4.20px;top:260.58px;font-size:10px;line-height:11.50px;color:#111;font-weight:bold;">septembre 2022</div>
<div class="t" style="left:100.48px;top:260.58px;font-size:10px;line-height:11.50px;color:#111;-webkit-text-stroke:0.35px #111;transform:scaleX(0.912);transform-origin:0 0;">434KC01</div>
<div class="t" style="left:168.17px;top:258.72px;font-size:10.5px;line-height:12.07px;color:#111;-webkit-text-stroke:0.3px #111;">465 000 F</div>
<div class="t" style="left:246.09px;top:258.72px;font-size:10.5px;line-height:12.07px;color:#111;-webkit-text-stroke:0.3px #111;">45 000 F</div>
<div class="t" style="left:323.59px;top:258.72px;font-size:10.5px;line-height:12.07px;color:#111;-webkit-text-stroke:0.3px #111;">87 000 F</div>
<div class="t" style="left:397.67px;top:258.72px;font-size:10.5px;line-height:12.07px;color:#111;-webkit-text-stroke:0.3px #111;">378 000 F</div>
<div class="t" style="left:498.16px;top:258.72px;font-size:10.5px;line-height:12.07px;color:#111;-webkit-text-stroke:0.3px #111;">22</div>
<div class="t" style="left:592.66px;top:258.72px;font-size:10.5px;line-height:12.07px;color:#111;-webkit-text-stroke:0.3px #111;">26</div>
<div class="t" style="left:671.96px;top:258.72px;font-size:10.5px;line-height:12.07px;color:#428d31;-webkit-text-stroke:0.3px #428d31;">118%</div>
<div class="t" style="left:747.09px;top:258.72px;font-size:10.5px;line-height:12.07px;color:#428d31;-webkit-text-stroke:0.3px #428d31;">17 885 F</div>
<div class="t" style="left:842.51px;top:258.72px;font-size:10.5px;line-height:12.07px;color:#428d31;-webkit-text-stroke:0.3px #428d31;">3 347 F</div>
<div class="t" style="left:931.59px;top:258.72px;font-size:10.5px;line-height:12.07px;color:#111;-webkit-text-stroke:0.3px #111;">14 538 F</div>
<div class="t" style="left:4.20px;top:278.48px;font-size:10px;line-height:11.50px;color:#111;font-weight:bold;">septembre 2022</div>
<div class="t" style="left:97.98px;top:278.48px;font-size:10px;line-height:11.50px;color:#111;-webkit-text-stroke:0.35px #111;transform:scaleX(0.921);transform-origin:0 0;">5594KA01</div>
<div class="t" style="left:168.17px;top:276.62px;font-size:10.5px;line-height:12.07px;color:#111;-webkit-text-stroke:0.3px #111;">380 000 F</div>
<div class="t" style="left:246.09px;top:276.62px;font-size:10.5px;line-height:12.07px;color:#111;-webkit-text-stroke:0.3px #111;">60 000 F</div>
<div class="t" style="left:323.59px;top:276.62px;font-size:10.5px;line-height:12.07px;color:#111;-webkit-text-stroke:0.3px #111;">62 000 F</div>
<div class="t" style="left:397.67px;top:276.62px;font-size:10.5px;line-height:12.07px;color:#111;-webkit-text-stroke:0.3px #111;">318 000 F</div>
<div class="t" style="left:498.16px;top:276.62px;font-size:10.5px;line-height:12.07px;color:#111;-webkit-text-stroke:0.3px #111;">22</div>
<div class="t" style="left:592.66px;top:276.62px;font-size:10.5px;line-height:12.07px;color:#111;-webkit-text-stroke:0.3px #111;">22</div>
<div class="t" style="left:671.57px;top:276.62px;font-size:10.5px;line-height:12.07px;color:#428d31;-webkit-text-stroke:0.3px #428d31;">100%</div>
<div class="t" style="left:747.09px;top:276.62px;font-size:10.5px;line-height:12.07px;color:#428d31;-webkit-text-stroke:0.3px #428d31;">17 273 F</div>
<div class="t" style="left:842.51px;top:276.62px;font-size:10.5px;line-height:12.07px;color:#428d31;-webkit-text-stroke:0.3px #428d31;">2 819 F</div>
<div class="t" style="left:931.59px;top:276.62px;font-size:10.5px;line-height:12.07px;color:#111;-webkit-text-stroke:0.3px #111;">14 454 F</div>
<div class="t" style="left:4.20px;top:296.38px;font-size:10px;line-height:11.50px;color:#111;font-weight:bold;">septembre 2022</div>
<div class="t" style="left:103.38px;top:296.38px;font-size:10px;line-height:11.50px;color:#111;-webkit-text-stroke:0.35px #111;transform:scaleX(1.054);transform-origin:0 0;">Gérant</div>
<div class="t" style="left:183.82px;top:294.52px;font-size:10.5px;line-height:12.07px;color:#111;-webkit-text-stroke:0.3px #111;">0 F</div>
<div class="t" style="left:321.05px;top:294.52px;font-size:10.5px;line-height:12.07px;color:#111;-webkit-text-stroke:0.3px #111;">117 000 F</div>
<div class="t" style="left:418.75px;top:294.52px;font-size:10.5px;line-height:12.07px;color:#111;-webkit-text-stroke:0.3px #111;">-</div>
<div class="t" style="left:502.25px;top:294.52px;font-size:10.5px;line-height:12.07px;color:#111;-webkit-text-stroke:0.3px #111;">-</div>
<div class="t" style="left:596.75px;top:294.52px;font-size:10.5px;line-height:12.07px;color:#111;-webkit-text-stroke:0.3px #111;">-</div>
<div class="t" style="left:683.25px;top:294.52px;font-size:10.5px;line-height:12.07px;color:#111;-webkit-text-stroke:0.3px #111;">-</div>
<div class="t" style="left:765.25px;top:294.52px;font-size:10.5px;line-height:12.07px;color:#111;-webkit-text-stroke:0.3px #111;">-</div>
<div class="t" style="left:857.75px;top:294.52px;font-size:10.5px;line-height:12.07px;color:#111;-webkit-text-stroke:0.3px #111;">-</div>
<div class="t" style="left:949.75px;top:294.52px;font-size:10.5px;line-height:12.07px;color:#111;-webkit-text-stroke:0.3px #111;">-</div>
<div class="t" style="left:18.93px;top:314.28px;font-size:10px;line-height:11.50px;color:#111;font-weight:bold;">août 2022</div>
<div class="t" style="left:100.48px;top:314.28px;font-size:10px;line-height:11.50px;color:#111;-webkit-text-stroke:0.35px #111;transform:scaleX(0.912);transform-origin:0 0;">434KC01</div>
<div class="t" style="left:168.17px;top:312.42px;font-size:10.5px;line-height:12.07px;color:#111;-webkit-text-stroke:0.3px #111;">505 000 F</div>
<div class="t" style="left:246.09px;top:312.42px;font-size:10.5px;line-height:12.07px;color:#111;-webkit-text-stroke:0.3px #111;">25 000 F</div>
<div class="t" style="left:323.59px;top:312.42px;font-size:10.5px;line-height:12.07px;color:#111;-webkit-text-stroke:0.3px #111;">59 000 F</div>
<div class="t" style="left:397.67px;top:312.42px;font-size:10.5px;line-height:12.07px;color:#111;-webkit-text-stroke:0.3px #111;">446 000 F</div>
<div class="t" style="left:498.16px;top:312.42px;font-size:10.5px;line-height:12.07px;color:#111;-webkit-text-stroke:0.3px #111;">23</div>
<div class="t" style="left:592.66px;top:312.42px;font-size:10.5px;line-height:12.07px;color:#111;-webkit-text-stroke:0.3px #111;">27</div>
<div class="t" style="left:671.96px;top:312.42px;font-size:10.5px;line-height:12.07px;color:#428d31;-webkit-text-stroke:0.3px #428d31;">117%</div>
<div class="t" style="left:747.09px;top:312.42px;font-size:10.5px;line-height:12.07px;color:#428d31;-webkit-text-stroke:0.3px #428d31;">18 704 F</div>
<div class="t" style="left:842.51px;top:312.42px;font-size:10.5px;line-height:12.07px;color:#428d31;-webkit-text-stroke:0.3px #428d31;">2 186 F</div>
<div class="t" style="left:931.59px;top:312.42px;font-size:10.5px;line-height:12.07px;color:#111;-webkit-text-stroke:0.3px #111;">16 518 F</div>
<div class="t" style="left:18.93px;top:332.19px;font-size:10px;line-height:11.50px;color:#111;font-weight:bold;">août 2022</div>
<div class="t" style="left:97.98px;top:332.19px;font-size:10px;line-height:11.50px;color:#111;-webkit-text-stroke:0.35px #111;transform:scaleX(0.921);transform-origin:0 0;">5594KA01</div>
<div class="t" style="left:168.17px;top:330.32px;font-size:10.5px;line-height:12.07px;color:#111;-webkit-text-stroke:0.3px #111;">430 000 F</div>
<div class="t" style="left:246.09px;top:330.32px;font-size:10.5px;line-height:12.07px;color:#111;-webkit-text-stroke:0.3px #111;">25 000 F</div>
<div class="t" style="left:320.67px;top:330.32px;font-size:10.5px;line-height:12.07px;color:#111;-webkit-text-stroke:0.3px #111;">161 733 F</div>
<div class="t" style="left:397.67px;top:330.32px;font-size:10.5px;line-height:12.07px;color:#111;-webkit-text-stroke:0.3px #111;">268 267 F</div>
<div class="t" style="left:498.16px;top:330.32px;font-size:10.5px;line-height:12.07px;color:#111;-webkit-text-stroke:0.3px #111;">23</div>
<div class="t" style="left:592.66px;top:330.32px;font-size:10.5px;line-height:12.07px;color:#111;-webkit-text-stroke:0.3px #111;">23</div>
<div class="t" style="left:671.57px;top:330.32px;font-size:10.5px;line-height:12.07px;color:#428d31;-webkit-text-stroke:0.3px #428d31;">100%</div>
<div class="t" style="left:747.09px;top:330.32px;font-size:10.5px;line-height:12.07px;color:#428d31;-webkit-text-stroke:0.3px #428d31;">18 696 F</div>
<div class="t" style="left:842.51px;top:330.32px;font-size:10.5px;line-height:12.07px;color:#111;-webkit-text-stroke:0.3px #111;">7 032 F</div>
<div class="t" style="left:931.98px;top:330.32px;font-size:10.5px;line-height:12.07px;color:#111;-webkit-text-stroke:0.3px #111;">11 664 F</div>
<div class="t" style="left:18.93px;top:350.08px;font-size:10px;line-height:11.50px;color:#111;font-weight:bold;">août 2022</div>
<div class="t" style="left:103.38px;top:350.08px;font-size:10px;line-height:11.50px;color:#111;-webkit-text-stroke:0.35px #111;transform:scaleX(1.054);transform-origin:0 0;">Gérant</div>
<div class="t" style="left:183.82px;top:348.22px;font-size:10.5px;line-height:12.07px;color:#111;-webkit-text-stroke:0.3px #111;">0 F</div>
<div class="t" style="left:321.05px;top:348.22px;font-size:10.5px;line-height:12.07px;color:#111;-webkit-text-stroke:0.3px #111;">110 000 F</div>
<div class="t" style="left:418.75px;top:348.22px;font-size:10.5px;line-height:12.07px;color:#111;-webkit-text-stroke:0.3px #111;">-</div>
<div class="t" style="left:502.25px;top:348.22px;font-size:10.5px;line-height:12.07px;color:#111;-webkit-text-stroke:0.3px #111;">-</div>
<div class="t" style="left:596.75px;top:348.22px;font-size:10.5px;line-height:12.07px;color:#111;-webkit-text-stroke:0.3px #111;">-</div>
<div class="t" style="left:683.25px;top:348.22px;font-size:10.5px;line-height:12.07px;color:#111;-webkit-text-stroke:0.3px #111;">-</div>
<div class="t" style="left:765.25px;top:348.22px;font-size:10.5px;line-height:12.07px;color:#111;-webkit-text-stroke:0.3px #111;">-</div>
<div class="t" style="left:857.75px;top:348.22px;font-size:10.5px;line-height:12.07px;color:#111;-webkit-text-stroke:0.3px #111;">-</div>
<div class="t" style="left:949.75px;top:348.22px;font-size:10.5px;line-height:12.07px;color:#111;-webkit-text-stroke:0.3px #111;">-</div>
<div class="t" style="left:18.93px;top:367.98px;font-size:10px;line-height:11.50px;color:#111;font-weight:bold;">août 2022</div>
<div class="t" style="left:91.43px;top:367.98px;font-size:10px;line-height:11.50px;color:#111;-webkit-text-stroke:0.35px #111;transform:scaleX(1.086);transform-origin:0 0;">Proprietaire</div>
<div class="t" style="left:183.82px;top:366.12px;font-size:10.5px;line-height:12.07px;color:#111;-webkit-text-stroke:0.3px #111;">0 F</div>
<div class="t" style="left:323.59px;top:366.12px;font-size:10.5px;line-height:12.07px;color:#111;-webkit-text-stroke:0.3px #111;">13 500 F</div>
<div class="t" style="left:418.75px;top:366.12px;font-size:10.5px;line-height:12.07px;color:#111;-webkit-text-stroke:0.3px #111;">-</div>
<div class="t" style="left:502.25px;top:366.12px;font-size:10.5px;line-height:12.07px;color:#111;-webkit-text-stroke:0.3px #111;">-</div>
<div class="t" style="left:596.75px;top:366.12px;font-size:10.5px;line-height:12.07px;color:#111;-webkit-text-stroke:0.3px #111;">-</div>
<div class="t" style="left:683.25px;top:366.12px;font-size:10.5px;line-height:12.07px;color:#111;-webkit-text-stroke:0.3px #111;">-</div>
<div class="t" style="left:765.25px;top:366.12px;font-size:10.5px;line-height:12.07px;color:#111;-webkit-text-stroke:0.3px #111;">-</div>
<div class="t" style="left:857.75px;top:366.12px;font-size:10.5px;line-height:12.07px;color:#111;-webkit-text-stroke:0.3px #111;">-</div>
<div class="t" style="left:949.75px;top:366.12px;font-size:10.5px;line-height:12.07px;color:#111;-webkit-text-stroke:0.3px #111;">-</div>
<div class="t" style="left:18.93px;top:385.88px;font-size:10px;line-height:11.50px;color:#111;font-weight:bold;">août 2022</div>
<div class="t" style="left:96.15px;top:385.88px;font-size:10px;line-height:11.50px;color:#111;-webkit-text-stroke:0.35px #111;transform:scaleX(1.077);transform-origin:0 0;">Véhicules</div>
<div class="t" style="left:183.82px;top:384.02px;font-size:10.5px;line-height:12.07px;color:#111;-webkit-text-stroke:0.3px #111;">0 F</div>
<div class="t" style="left:326.51px;top:384.02px;font-size:10.5px;line-height:12.07px;color:#111;-webkit-text-stroke:0.3px #111;">6 000 F</div>
<div class="t" style="left:418.75px;top:384.02px;font-size:10.5px;line-height:12.07px;color:#111;-webkit-text-stroke:0.3px #111;">-</div>
<div class="t" style="left:502.25px;top:384.02px;font-size:10.5px;line-height:12.07px;color:#111;-webkit-text-stroke:0.3px #111;">-</div>
<div class="t" style="left:596.75px;top:384.02px;font-size:10.5px;line-height:12.07px;color:#111;-webkit-text-stroke:0.3px #111;">-</div>
<div class="t" style="left:683.25px;top:384.02px;font-size:10.5px;line-height:12.07px;color:#111;-webkit-text-stroke:0.3px #111;">-</div>
<div class="t" style="left:765.25px;top:384.02px;font-size:10.5px;line-height:12.07px;color:#111;-webkit-text-stroke:0.3px #111;">-</div>
<div class="t" style="left:857.75px;top:384.02px;font-size:10.5px;line-height:12.07px;color:#111;-webkit-text-stroke:0.3px #111;">-</div>
<div class="t" style="left:949.75px;top:384.02px;font-size:10.5px;line-height:12.07px;color:#111;-webkit-text-stroke:0.3px #111;">-</div>
<div class="t" style="left:16.43px;top:403.78px;font-size:10px;line-height:11.50px;color:#111;font-weight:bold;">juillet 2022</div>
<div class="t" style="left:100.48px;top:403.78px;font-size:10px;line-height:11.50px;color:#111;-webkit-text-stroke:0.35px #111;transform:scaleX(0.912);transform-origin:0 0;">434KC01</div>
<div class="t" style="left:168.17px;top:401.92px;font-size:10.5px;line-height:12.07px;color:#111;-webkit-text-stroke:0.3px #111;">490 000 F</div>
<div class="t" style="left:246.09px;top:401.92px;font-size:10.5px;line-height:12.07px;color:#111;-webkit-text-stroke:0.3px #111;">10 000 F</div>
<div class="t" style="left:320.67px;top:401.92px;font-size:10.5px;line-height:12.07px;color:#111;-webkit-text-stroke:0.3px #111;">155 000 F</div>
<div class="t" style="left:397.67px;top:401.92px;font-size:10.5px;line-height:12.07px;color:#111;-webkit-text-stroke:0.3px #111;">335 000 F</div>
<div class="t" style="left:498.16px;top:401.92px;font-size:10.5px;line-height:12.07px;color:#111;-webkit-text-stroke:0.3px #111;">21</div>
<div class="t" style="left:592.66px;top:401.92px;font-size:10.5px;line-height:12.07px;color:#111;-webkit-text-stroke:0.3px #111;">25</div>
<div class="t" style="left:671.96px;top:401.92px;font-size:10.5px;line-height:12.07px;color:#428d31;-webkit-text-stroke:0.3px #428d31;">119%</div>
<div class="t" style="left:747.09px;top:401.92px;font-size:10.5px;line-height:12.07px;color:#428d31;-webkit-text-stroke:0.3px #428d31;">19 600 F</div>
<div class="t" style="left:842.51px;top:401.92px;font-size:10.5px;line-height:12.07px;color:#111;-webkit-text-stroke:0.3px #111;">6 200 F</div>
<div class="t" style="left:931.59px;top:401.92px;font-size:10.5px;line-height:12.07px;color:#111;-webkit-text-stroke:0.3px #111;">13 400 F</div>
<div class="t" style="left:16.43px;top:421.68px;font-size:10px;line-height:11.50px;color:#111;font-weight:bold;">juillet 2022</div>
<div class="t" style="left:97.98px;top:421.68px;font-size:10px;line-height:11.50px;color:#111;-webkit-text-stroke:0.35px #111;transform:scaleX(0.921);transform-origin:0 0;">5594KA01</div>
<div class="t" style="left:168.17px;top:419.82px;font-size:10.5px;line-height:12.07px;color:#111;-webkit-text-stroke:0.3px #111;">325 000 F</div>
<div class="t" style="left:246.09px;top:419.82px;font-size:10.5px;line-height:12.07px;color:#111;-webkit-text-stroke:0.3px #111;">80 000 F</div>
<div class="t" style="left:320.67px;top:419.82px;font-size:10.5px;line-height:12.07px;color:#111;-webkit-text-stroke:0.3px #111;">122 000 F</div>
<div class="t" style="left:397.67px;top:419.82px;font-size:10.5px;line-height:12.07px;color:#111;-webkit-text-stroke:0.3px #111;">203 000 F</div>
<div class="t" style="left:498.16px;top:419.82px;font-size:10.5px;line-height:12.07px;color:#111;-webkit-text-stroke:0.3px #111;">21</div>
<div class="t" style="left:592.66px;top:419.82px;font-size:10.5px;line-height:12.07px;color:#111;-webkit-text-stroke:0.3px #111;">21</div>
<div class="t" style="left:671.57px;top:419.82px;font-size:10.5px;line-height:12.07px;color:#428d31;-webkit-text-stroke:0.3px #428d31;">100%</div>
<div class="t" style="left:747.09px;top:419.82px;font-size:10.5px;line-height:12.07px;color:#a81d26;-webkit-text-stroke:0.3px #a81d26;">15 477 F</div>
<div class="t" style="left:842.51px;top:419.82px;font-size:10.5px;line-height:12.07px;color:#111;-webkit-text-stroke:0.3px #111;">5 810 F</div>
<div class="t" style="left:934.51px;top:419.82px;font-size:10.5px;line-height:12.07px;color:#a81d26;-webkit-text-stroke:0.3px #a81d26;">9 667 F</div>
<div class="t" style="left:20.59px;top:439.58px;font-size:10px;line-height:11.50px;color:#111;font-weight:bold;">juin 2022</div>
<div class="t" style="left:100.48px;top:439.58px;font-size:10px;line-height:11.50px;color:#111;-webkit-text-stroke:0.35px #111;transform:scaleX(0.912);transform-origin:0 0;">434KC01</div>
<div class="t" style="left:168.17px;top:437.72px;font-size:10.5px;line-height:12.07px;color:#111;-webkit-text-stroke:0.3px #111;">447 000 F</div>
<div class="t" style="left:246.09px;top:437.72px;font-size:10.5px;line-height:12.07px;color:#111;-webkit-text-stroke:0.3px #111;">45 000 F</div>
<div class="t" style="left:320.67px;top:437.72px;font-size:10.5px;line-height:12.07px;color:#111;-webkit-text-stroke:0.3px #111;">186 000 F</div>
<div class="t" style="left:397.67px;top:437.72px;font-size:10.5px;line-height:12.07px;color:#111;-webkit-text-stroke:0.3px #111;">261 000 F</div>
<div class="t" style="left:498.16px;top:437.72px;font-size:10.5px;line-height:12.07px;color:#111;-webkit-text-stroke:0.3px #111;">22</div>
<div class="t" style="left:592.66px;top:437.72px;font-size:10.5px;line-height:12.07px;color:#111;-webkit-text-stroke:0.3px #111;">24</div>
<div class="t" style="left:671.57px;top:437.72px;font-size:10.5px;line-height:12.07px;color:#428d31;-webkit-text-stroke:0.3px #428d31;">109%</div>
<div class="t" style="left:747.09px;top:437.72px;font-size:10.5px;line-height:12.07px;color:#428d31;-webkit-text-stroke:0.3px #428d31;">18 625 F</div>
<div class="t" style="left:842.51px;top:437.72px;font-size:10.5px;line-height:12.07px;color:#111;-webkit-text-stroke:0.3px #111;">7 750 F</div>
<div class="t" style="left:931.59px;top:437.72px;font-size:10.5px;line-height:12.07px;color:#111;-webkit-text-stroke:0.3px #111;">10 875 F</div>
<div class="t" style="left:20.59px;top:457.48px;font-size:10px;line-height:11.50px;color:#111;font-weight:bold;">juin 2022</div>
<div class="t" style="left:97.98px;top:457.48px;font-size:10px;line-height:11.50px;color:#111;-webkit-text-stroke:0.35px #111;transform:scaleX(0.921);transform-origin:0 0;">5594KA01</div>
<div class="t" style="left:168.17px;top:455.62px;font-size:10.5px;line-height:12.07px;color:#111;-webkit-text-stroke:0.3px #111;">290 000 F</div>
<div class="t" style="left:258.82px;top:455.62px;font-size:10.5px;line-height:12.07px;color:#111;-webkit-text-stroke:0.3px #111;">0 F</div>
<div class="t" style="left:320.67px;top:455.62px;font-size:10.5px;line-height:12.07px;color:#111;-webkit-text-stroke:0.3px #111;">187 000 F</div>
<div class="t" style="left:397.67px;top:455.62px;font-size:10.5px;line-height:12.07px;color:#111;-webkit-text-stroke:0.3px #111;">103 000 F</div>
<div class="t" style="left:498.16px;top:455.62px;font-size:10.5px;line-height:12.07px;color:#111;-webkit-text-stroke:0.3px #111;">22</div>
<div class="t" style="left:592.66px;top:455.62px;font-size:10.5px;line-height:12.07px;color:#111;-webkit-text-stroke:0.3px #111;">15</div>
<div class="t" style="left:674.49px;top:455.62px;font-size:10.5px;line-height:12.07px;color:#a81d26;-webkit-text-stroke:0.3px #a81d26;">68%</div>
<div class="t" style="left:747.09px;top:455.62px;font-size:10.5px;line-height:12.07px;color:#428d31;-webkit-text-stroke:0.3px #428d31;">19 334 F</div>
<div class="t" style="left:839.59px;top:455.62px;font-size:10.5px;line-height:12.07px;color:#a81d26;-webkit-text-stroke:0.3px #a81d26;">12 467 F</div>
<div class="t" style="left:934.51px;top:455.62px;font-size:10.5px;line-height:12.07px;color:#a81d26;-webkit-text-stroke:0.3px #a81d26;">6 867 F</div>
<div class="t" style="left:20.59px;top:475.38px;font-size:10px;line-height:11.50px;color:#111;font-weight:bold;">juin 2022</div>
<div class="t" style="left:103.38px;top:475.38px;font-size:10px;line-height:11.50px;color:#111;-webkit-text-stroke:0.35px #111;transform:scaleX(1.054);transform-origin:0 0;">Gérant</div>
<div class="t" style="left:183.82px;top:473.52px;font-size:10.5px;line-height:12.07px;color:#111;-webkit-text-stroke:0.3px #111;">0 F</div>
<div class="t" style="left:320.67px;top:473.52px;font-size:10.5px;line-height:12.07px;color:#111;-webkit-text-stroke:0.3px #111;">100 000 F</div>
<div class="t" style="left:418.75px;top:473.52px;font-size:10.5px;line-height:12.07px;color:#111;-webkit-text-stroke:0.3px #111;">-</div>
<div class="t" style="left:502.25px;top:473.52px;font-size:10.5px;line-height:12.07px;color:#111;-webkit-text-stroke:0.3px #111;">-</div>
<div class="t" style="left:596.75px;top:473.52px;font-size:10.5px;line-height:12.07px;color:#111;-webkit-text-stroke:0.3px #111;">-</div>
<div class="t" style="left:683.25px;top:473.52px;font-size:10.5px;line-height:12.07px;color:#111;-webkit-text-stroke:0.3px #111;">-</div>
<div class="t" style="left:765.25px;top:473.52px;font-size:10.5px;line-height:12.07px;color:#111;-webkit-text-stroke:0.3px #111;">-</div>
<div class="t" style="left:857.75px;top:473.52px;font-size:10.5px;line-height:12.07px;color:#111;-webkit-text-stroke:0.3px #111;">-</div>
<div class="t" style="left:949.75px;top:473.52px;font-size:10.5px;line-height:12.07px;color:#111;-webkit-text-stroke:0.3px #111;">-</div>
<div class="t" style="left:20.59px;top:493.28px;font-size:10px;line-height:11.50px;color:#111;font-weight:bold;">juin 2022</div>
<div class="t" style="left:91.43px;top:493.28px;font-size:10px;line-height:11.50px;color:#111;-webkit-text-stroke:0.35px #111;transform:scaleX(1.086);transform-origin:0 0;">Proprietaire</div>
<div class="t" style="left:183.82px;top:491.42px;font-size:10.5px;line-height:12.07px;color:#111;-webkit-text-stroke:0.3px #111;">0 F</div>
<div class="t" style="left:326.51px;top:491.42px;font-size:10.5px;line-height:12.07px;color:#111;-webkit-text-stroke:0.3px #111;">2 500 F</div>
<div class="t" style="left:418.75px;top:491.42px;font-size:10.5px;line-height:12.07px;color:#111;-webkit-text-stroke:0.3px #111;">-</div>
<div class="t" style="left:502.25px;top:491.42px;font-size:10.5px;line-height:12.07px;color:#111;-webkit-text-stroke:0.3px #111;">-</div>
<div class="t" style="left:596.75px;top:491.42px;font-size:10.5px;line-height:12.07px;color:#111;-webkit-text-stroke:0.3px #111;">-</div>
<div class="t" style="left:683.25px;top:491.42px;font-size:10.5px;line-height:12.07px;color:#111;-webkit-text-stroke:0.3px #111;">-</div>
<div class="t" style="left:765.25px;top:491.42px;font-size:10.5px;line-height:12.07px;color:#111;-webkit-text-stroke:0.3px #111;">-</div>
<div class="t" style="left:857.75px;top:491.42px;font-size:10.5px;line-height:12.07px;color:#111;-webkit-text-stroke:0.3px #111;">-</div>
<div class="t" style="left:949.75px;top:491.42px;font-size:10.5px;line-height:12.07px;color:#111;-webkit-text-stroke:0.3px #111;">-</div>
<div class="t" style="left:20.87px;top:511.19px;font-size:10px;line-height:11.50px;color:#111;font-weight:bold;">mai 2022</div>
<div class="t" style="left:100.48px;top:511.19px;font-size:10px;line-height:11.50px;color:#111;-webkit-text-stroke:0.35px #111;transform:scaleX(0.912);transform-origin:0 0;">434KC01</div>
<div class="t" style="left:168.17px;top:509.32px;font-size:10.5px;line-height:12.07px;color:#111;-webkit-text-stroke:0.3px #111;">390 000 F</div>
<div class="t" style="left:246.09px;top:509.32px;font-size:10.5px;line-height:12.07px;color:#111;-webkit-text-stroke:0.3px #111;">20 000 F</div>
<div class="t" style="left:320.67px;top:509.32px;font-size:10.5px;line-height:12.07px;color:#111;-webkit-text-stroke:0.3px #111;">133 000 F</div>
<div class="t" style="left:397.67px;top:509.32px;font-size:10.5px;line-height:12.07px;color:#111;-webkit-text-stroke:0.3px #111;">257 000 F</div>
<div class="t" style="left:498.16px;top:509.32px;font-size:10.5px;line-height:12.07px;color:#111;-webkit-text-stroke:0.3px #111;">22</div>
<div class="t" style="left:592.66px;top:509.32px;font-size:10.5px;line-height:12.07px;color:#111;-webkit-text-stroke:0.3px #111;">21</div>
<div class="t" style="left:674.49px;top:509.32px;font-size:10.5px;line-height:12.07px;color:#428d31;-webkit-text-stroke:0.3px #428d31;">96%</div>
<div class="t" style="left:747.09px;top:509.32px;font-size:10.5px;line-height:12.07px;color:#428d31;-webkit-text-stroke:0.3px #428d31;">18 572 F</div>
<div class="t" style="left:842.51px;top:509.32px;font-size:10.5px;line-height:12.07px;color:#111;-webkit-text-stroke:0.3px #111;">6 334 F</div>
<div class="t" style="left:931.59px;top:509.32px;font-size:10.5px;line-height:12.07px;color:#111;-webkit-text-stroke:0.3px #111;">12 238 F</div>
<div class="t" style="left:20.87px;top:529.08px;font-size:10px;line-height:11.50px;color:#111;font-weight:bold;">mai 2022</div>
<div class="t" style="left:97.98px;top:529.08px;font-size:10px;line-height:11.50px;color:#111;-webkit-text-stroke:0.35px #111;transform:scaleX(0.921);transform-origin:0 0;">5594KA01</div>
<div class="t" style="left:168.17px;top:527.22px;font-size:10.5px;line-height:12.07px;color:#111;-webkit-text-stroke:0.3px #111;">310 000 F</div>
<div class="t" style="left:246.09px;top:527.22px;font-size:10.5px;line-height:12.07px;color:#111;-webkit-text-stroke:0.3px #111;">30 000 F</div>
<div class="t" style="left:320.67px;top:527.22px;font-size:10.5px;line-height:12.07px;color:#111;-webkit-text-stroke:0.3px #111;">216 500 F</div>
<div class="t" style="left:400.59px;top:527.22px;font-size:10.5px;line-height:12.07px;color:#111;-webkit-text-stroke:0.3px #111;">93 500 F</div>
<div class="t" style="left:498.16px;top:527.22px;font-size:10.5px;line-height:12.07px;color:#111;-webkit-text-stroke:0.3px #111;">22</div>
<div class="t" style="left:592.66px;top:527.22px;font-size:10.5px;line-height:12.07px;color:#111;-webkit-text-stroke:0.3px #111;">17</div>
<div class="t" style="left:674.49px;top:527.22px;font-size:10.5px;line-height:12.07px;color:#111;-webkit-text-stroke:0.3px #111;">77%</div>
<div class="t" style="left:747.09px;top:527.22px;font-size:10.5px;line-height:12.07px;color:#428d31;-webkit-text-stroke:0.3px #428d31;">18 236 F</div>
<div class="t" style="left:839.59px;top:527.22px;font-size:10.5px;line-height:12.07px;color:#a81d26;-webkit-text-stroke:0.3px #a81d26;">12 736 F</div>
<div class="t" style="left:934.51px;top:527.22px;font-size:10.5px;line-height:12.07px;color:#a81d26;-webkit-text-stroke:0.3px #a81d26;">5 500 F</div>
<div class="t" style="left:20.87px;top:546.98px;font-size:10px;line-height:11.50px;color:#111;font-weight:bold;">mai 2022</div>
<div class="t" style="left:103.38px;top:546.98px;font-size:10px;line-height:11.50px;color:#111;-webkit-text-stroke:0.35px #111;transform:scaleX(1.054);transform-origin:0 0;">Gérant</div>
<div class="t" style="left:183.82px;top:545.12px;font-size:10.5px;line-height:12.07px;color:#111;-webkit-text-stroke:0.3px #111;">0 F</div>
<div class="t" style="left:320.67px;top:545.12px;font-size:10.5px;line-height:12.07px;color:#111;-webkit-text-stroke:0.3px #111;">105 000 F</div>
<div class="t" style="left:418.75px;top:545.12px;font-size:10.5px;line-height:12.07px;color:#111;-webkit-text-stroke:0.3px #111;">-</div>
<div class="t" style="left:502.25px;top:545.12px;font-size:10.5px;line-height:12.07px;color:#111;-webkit-text-stroke:0.3px #111;">-</div>
<div class="t" style="left:596.75px;top:545.12px;font-size:10.5px;line-height:12.07px;color:#111;-webkit-text-stroke:0.3px #111;">-</div>
<div class="t" style="left:683.25px;top:545.12px;font-size:10.5px;line-height:12.07px;color:#111;-webkit-text-stroke:0.3px #111;">-</div>
<div class="t" style="left:765.25px;top:545.12px;font-size:10.5px;line-height:12.07px;color:#111;-webkit-text-stroke:0.3px #111;">-</div>
<div class="t" style="left:857.75px;top:545.12px;font-size:10.5px;line-height:12.07px;color:#111;-webkit-text-stroke:0.3px #111;">-</div>
<div class="t" style="left:949.75px;top:545.12px;font-size:10.5px;line-height:12.07px;color:#111;-webkit-text-stroke:0.3px #111;">-</div>
<div class="t" style="left:20.87px;top:564.88px;font-size:10px;line-height:11.50px;color:#111;font-weight:bold;">mai 2022</div>
<div class="t" style="left:91.43px;top:564.88px;font-size:10px;line-height:11.50px;color:#111;-webkit-text-stroke:0.35px #111;transform:scaleX(1.086);transform-origin:0 0;">Proprietaire</div>
<div class="t" style="left:183.82px;top:563.02px;font-size:10.5px;line-height:12.07px;color:#111;-webkit-text-stroke:0.3px #111;">0 F</div>
<div class="t" style="left:323.98px;top:563.02px;font-size:10.5px;line-height:12.07px;color:#111;-webkit-text-stroke:0.3px #111;">11 000 F</div>
<div class="t" style="left:418.75px;top:563.02px;font-size:10.5px;line-height:12.07px;color:#111;-webkit-text-stroke:0.3px #111;">-</div>
<div class="t" style="left:502.25px;top:563.02px;font-size:10.5px;line-height:12.07px;color:#111;-webkit-text-stroke:0.3px #111;">-</div>
<div class="t" style="left:596.75px;top:563.02px;font-size:10.5px;line-height:12.07px;color:#111;-webkit-text-stroke:0.3px #111;">-</div>
<div class="t" style="left:683.25px;top:563.02px;font-size:10.5px;line-height:12.07px;color:#111;-webkit-text-stroke:0.3px #111;">-</div>
<div class="t" style="left:765.25px;top:563.02px;font-size:10.5px;line-height:12.07px;color:#111;-webkit-text-stroke:0.3px #111;">-</div>
<div class="t" style="left:857.75px;top:563.02px;font-size:10.5px;line-height:12.07px;color:#111;-webkit-text-stroke:0.3px #111;">-</div>
<div class="t" style="left:949.75px;top:563.02px;font-size:10.5px;line-height:12.07px;color:#111;-webkit-text-stroke:0.3px #111;">-</div>
<div class="t" style="left:19.20px;top:582.78px;font-size:10px;line-height:11.50px;color:#111;font-weight:bold;">avril 2022</div>
<div class="t" style="left:100.48px;top:582.78px;font-size:10px;line-height:11.50px;color:#111;-webkit-text-stroke:0.35px #111;transform:scaleX(0.912);transform-origin:0 0;">434KC01</div>
<div class="t" style="left:168.17px;top:580.92px;font-size:10.5px;line-height:12.07px;color:#111;-webkit-text-stroke:0.3px #111;">460 000 F</div>
<div class="t" style="left:258.82px;top:580.92px;font-size:10.5px;line-height:12.07px;color:#111;-webkit-text-stroke:0.3px #111;">0 F</div>
<div class="t" style="left:323.59px;top:580.92px;font-size:10.5px;line-height:12.07px;color:#111;-webkit-text-stroke:0.3px #111;">63 500 F</div>
<div class="t" style="left:397.67px;top:580.92px;font-size:10.5px;line-height:12.07px;color:#111;-webkit-text-stroke:0.3px #111;">396 500 F</div>
<div class="t" style="left:498.16px;top:580.92px;font-size:10.5px;line-height:12.07px;color:#111;-webkit-text-stroke:0.3px #111;">21</div>
<div class="t" style="left:592.66px;top:580.92px;font-size:10.5px;line-height:12.07px;color:#111;-webkit-text-stroke:0.3px #111;">22</div>
<div class="t" style="left:671.57px;top:580.92px;font-size:10.5px;line-height:12.07px;color:#428d31;-webkit-text-stroke:0.3px #428d31;">105%</div>
<div class="t" style="left:747.09px;top:580.92px;font-size:10.5px;line-height:12.07px;color:#428d31;-webkit-text-stroke:0.3px #428d31;">20 910 F</div>
<div class="t" style="left:842.51px;top:580.92px;font-size:10.5px;line-height:12.07px;color:#428d31;-webkit-text-stroke:0.3px #428d31;">2 887 F</div>
<div class="t" style="left:931.59px;top:580.92px;font-size:10.5px;line-height:12.07px;color:#428d31;-webkit-text-stroke:0.3px #428d31;">18 023 F</div>
<div class="t" style="left:19.20px;top:600.68px;font-size:10px;line-height:11.50px;color:#111;font-weight:bold;">avril 2022</div>
<div class="t" style="left:97.98px;top:600.68px;font-size:10px;line-height:11.50px;color:#111;-webkit-text-stroke:0.35px #111;transform:scaleX(0.921);transform-origin:0 0;">5594KA01</div>
<div class="t" style="left:168.17px;top:598.82px;font-size:10.5px;line-height:12.07px;color:#111;-webkit-text-stroke:0.3px #111;">360 000 F</div>
<div class="t" style="left:246.09px;top:598.82px;font-size:10.5px;line-height:12.07px;color:#111;-webkit-text-stroke:0.3px #111;">20 000 F</div>
<div class="t" style="left:323.59px;top:598.82px;font-size:10.5px;line-height:12.07px;color:#111;-webkit-text-stroke:0.3px #111;">49 000 F</div>
<div class="t" style="left:398.05px;top:598.82px;font-size:10.5px;line-height:12.07px;color:#111;-webkit-text-stroke:0.3px #111;">311 000 F</div>
<div class="t" style="left:498.16px;top:598.82px;font-size:10.5px;line-height:12.07px;color:#111;-webkit-text-stroke:0.3px #111;">21</div>
<div class="t" style="left:592.66px;top:598.82px;font-size:10.5px;line-height:12.07px;color:#111;-webkit-text-stroke:0.3px #111;">19</div>
<div class="t" style="left:674.49px;top:598.82px;font-size:10.5px;line-height:12.07px;color:#428d31;-webkit-text-stroke:0.3px #428d31;">91%</div>
<div class="t" style="left:747.09px;top:598.82px;font-size:10.5px;line-height:12.07px;color:#428d31;-webkit-text-stroke:0.3px #428d31;">18 948 F</div>
<div class="t" style="left:842.51px;top:598.82px;font-size:10.5px;line-height:12.07px;color:#428d31;-webkit-text-stroke:0.3px #428d31;">2 579 F</div>
<div class="t" style="left:931.59px;top:598.82px;font-size:10.5px;line-height:12.07px;color:#111;-webkit-text-stroke:0.3px #111;">16 369 F</div>
<div class="t" style="left:19.20px;top:618.58px;font-size:10px;line-height:11.50px;color:#111;font-weight:bold;">avril 2022</div>
<div class="t" style="left:103.38px;top:618.58px;font-size:10px;line-height:11.50px;color:#111;-webkit-text-stroke:0.35px #111;transform:scaleX(1.054);transform-origin:0 0;">Gérant</div>
<div class="t" style="left:183.82px;top:616.72px;font-size:10.5px;line-height:12.07px;color:#111;-webkit-text-stroke:0.3px #111;">0 F</div>
<div class="t" style="left:320.67px;top:616.72px;font-size:10.5px;line-height:12.07px;color:#111;-webkit-text-stroke:0.3px #111;">100 000 F</div>
<div class="t" style="left:418.75px;top:616.72px;font-size:10.5px;line-height:12.07px;color:#111;-webkit-text-stroke:0.3px #111;">-</div>
<div class="t" style="left:502.25px;top:616.72px;font-size:10.5px;line-height:12.07px;color:#111;-webkit-text-stroke:0.3px #111;">-</div>
<div class="t" style="left:596.75px;top:616.72px;font-size:10.5px;line-height:12.07px;color:#111;-webkit-text-stroke:0.3px #111;">-</div>
<div class="t" style="left:683.25px;top:616.72px;font-size:10.5px;line-height:12.07px;color:#111;-webkit-text-stroke:0.3px #111;">-</div>
<div class="t" style="left:765.25px;top:616.72px;font-size:10.5px;line-height:12.07px;color:#111;-webkit-text-stroke:0.3px #111;">-</div>
<div class="t" style="left:857.75px;top:616.72px;font-size:10.5px;line-height:12.07px;color:#111;-webkit-text-stroke:0.3px #111;">-</div>
<div class="t" style="left:949.75px;top:616.72px;font-size:10.5px;line-height:12.07px;color:#111;-webkit-text-stroke:0.3px #111;">-</div>
<div class="t" style="left:17.53px;top:636.48px;font-size:10px;line-height:11.50px;color:#111;font-weight:bold;">mars 2022</div>
<div class="t" style="left:100.48px;top:636.48px;font-size:10px;line-height:11.50px;color:#111;-webkit-text-stroke:0.35px #111;transform:scaleX(0.912);transform-origin:0 0;">434KC01</div>
<div class="t" style="left:168.17px;top:634.62px;font-size:10.5px;line-height:12.07px;color:#111;-webkit-text-stroke:0.3px #111;">480 000 F</div>
<div class="t" style="left:258.82px;top:634.62px;font-size:10.5px;line-height:12.07px;color:#111;-webkit-text-stroke:0.3px #111;">0 F</div>
<div class="t" style="left:323.59px;top:634.62px;font-size:10.5px;line-height:12.07px;color:#111;-webkit-text-stroke:0.3px #111;">22 500 F</div>
<div class="t" style="left:397.67px;top:634.62px;font-size:10.5px;line-height:12.07px;color:#111;-webkit-text-stroke:0.3px #111;">457 500 F</div>
<div class="t" style="left:498.16px;top:634.62px;font-size:10.5px;line-height:12.07px;color:#111;-webkit-text-stroke:0.3px #111;">23</div>
<div class="t" style="left:592.66px;top:634.62px;font-size:10.5px;line-height:12.07px;color:#111;-webkit-text-stroke:0.3px #111;">24</div>
<div class="t" style="left:671.57px;top:634.62px;font-size:10.5px;line-height:12.07px;color:#428d31;-webkit-text-stroke:0.3px #428d31;">104%</div>
<div class="t" style="left:747.09px;top:634.62px;font-size:10.5px;line-height:12.07px;color:#428d31;-webkit-text-stroke:0.3px #428d31;">20 000 F</div>
<div class="t" style="left:846.48px;top:634.62px;font-size:10.5px;line-height:12.07px;color:#428d31;-webkit-text-stroke:0.3px #428d31;">938 F</div>
<div class="t" style="left:931.59px;top:634.62px;font-size:10.5px;line-height:12.07px;color:#428d31;-webkit-text-stroke:0.3px #428d31;">19 062 F</div>
<div class="t" style="left:17.53px;top:654.38px;font-size:10px;line-height:11.50px;color:#111;font-weight:bold;">mars 2022</div>
<div class="t" style="left:97.98px;top:654.38px;font-size:10px;line-height:11.50px;color:#111;-webkit-text-stroke:0.35px #111;transform:scaleX(0.921);transform-origin:0 0;">5594KA01</div>
<div class="t" style="left:168.17px;top:652.52px;font-size:10.5px;line-height:12.07px;color:#111;-webkit-text-stroke:0.3px #111;">395 000 F</div>
<div class="t" style="left:258.82px;top:652.52px;font-size:10.5px;line-height:12.07px;color:#111;-webkit-text-stroke:0.3px #111;">0 F</div>
<div class="t" style="left:320.67px;top:652.52px;font-size:10.5px;line-height:12.07px;color:#111;-webkit-text-stroke:0.3px #111;">207 000 F</div>
<div class="t" style="left:397.67px;top:652.52px;font-size:10.5px;line-height:12.07px;color:#111;-webkit-text-stroke:0.3px #111;">188 000 F</div>
<div class="t" style="left:498.16px;top:652.52px;font-size:10.5px;line-height:12.07px;color:#111;-webkit-text-stroke:0.3px #111;">23</div>
<div class="t" style="left:592.66px;top:652.52px;font-size:10.5px;line-height:12.07px;color:#111;-webkit-text-stroke:0.3px #111;">20</div>
<div class="t" style="left:674.49px;top:652.52px;font-size:10.5px;line-height:12.07px;color:#428d31;-webkit-text-stroke:0.3px #428d31;">87%</div>
<div class="t" style="left:747.09px;top:652.52px;font-size:10.5px;line-height:12.07px;color:#428d31;-webkit-text-stroke:0.3px #428d31;">19 750 F</div>
<div class="t" style="left:839.59px;top:652.52px;font-size:10.5px;line-height:12.07px;color:#a81d26;-webkit-text-stroke:0.3px #a81d26;">10 350 F</div>
<div class="t" style="left:934.51px;top:652.52px;font-size:10.5px;line-height:12.07px;color:#a81d26;-webkit-text-stroke:0.3px #a81d26;">9 400 F</div>
<div class="t" style="left:17.53px;top:672.28px;font-size:10px;line-height:11.50px;color:#111;font-weight:bold;">mars 2022</div>
<div class="t" style="left:103.38px;top:672.28px;font-size:10px;line-height:11.50px;color:#111;-webkit-text-stroke:0.35px #111;transform:scaleX(1.054);transform-origin:0 0;">Gérant</div>
<div class="t" style="left:183.82px;top:670.42px;font-size:10.5px;line-height:12.07px;color:#111;-webkit-text-stroke:0.3px #111;">0 F</div>
<div class="t" style="left:320.67px;top:670.42px;font-size:10.5px;line-height:12.07px;color:#111;-webkit-text-stroke:0.3px #111;">101 000 F</div>
<div class="t" style="left:418.75px;top:670.42px;font-size:10.5px;line-height:12.07px;color:#111;-webkit-text-stroke:0.3px #111;">-</div>
<div class="t" style="left:502.25px;top:670.42px;font-size:10.5px;line-height:12.07px;color:#111;-webkit-text-stroke:0.3px #111;">-</div>
<div class="t" style="left:596.75px;top:670.42px;font-size:10.5px;line-height:12.07px;color:#111;-webkit-text-stroke:0.3px #111;">-</div>
<div class="t" style="left:683.25px;top:670.42px;font-size:10.5px;line-height:12.07px;color:#111;-webkit-text-stroke:0.3px #111;">-</div>
<div class="t" style="left:765.25px;top:670.42px;font-size:10.5px;line-height:12.07px;color:#111;-webkit-text-stroke:0.3px #111;">-</div>
<div class="t" style="left:857.75px;top:670.42px;font-size:10.5px;line-height:12.07px;color:#111;-webkit-text-stroke:0.3px #111;">-</div>
<div class="t" style="left:949.75px;top:670.42px;font-size:10.5px;line-height:12.07px;color:#111;-webkit-text-stroke:0.3px #111;">-</div>
<div class="t" style="left:17.53px;top:690.18px;font-size:10px;line-height:11.50px;color:#111;font-weight:bold;">mars 2022</div>
<div class="t" style="left:91.43px;top:690.18px;font-size:10px;line-height:11.50px;color:#111;-webkit-text-stroke:0.35px #111;transform:scaleX(1.086);transform-origin:0 0;">Proprietaire</div>
<div class="t" style="left:183.82px;top:688.32px;font-size:10.5px;line-height:12.07px;color:#111;-webkit-text-stroke:0.3px #111;">0 F</div>
<div class="t" style="left:323.59px;top:688.32px;font-size:10.5px;line-height:12.07px;color:#111;-webkit-text-stroke:0.3px #111;">10 000 F</div>
<div class="t" style="left:418.75px;top:688.32px;font-size:10.5px;line-height:12.07px;color:#111;-webkit-text-stroke:0.3px #111;">-</div>
<div class="t" style="left:502.25px;top:688.32px;font-size:10.5px;line-height:12.07px;color:#111;-webkit-text-stroke:0.3px #111;">-</div>
<div class="t" style="left:596.75px;top:688.32px;font-size:10.5px;line-height:12.07px;color:#111;-webkit-text-stroke:0.3px #111;">-</div>
<div class="t" style="left:683.25px;top:688.32px;font-size:10.5px;line-height:12.07px;color:#111;-webkit-text-stroke:0.3px #111;">-</div>
<div class="t" style="left:765.25px;top:688.32px;font-size:10.5px;line-height:12.07px;color:#111;-webkit-text-stroke:0.3px #111;">-</div>
<div class="t" style="left:857.75px;top:688.32px;font-size:10.5px;line-height:12.07px;color:#111;-webkit-text-stroke:0.3px #111;">-</div>
<div class="t" style="left:949.75px;top:688.32px;font-size:10.5px;line-height:12.07px;color:#111;-webkit-text-stroke:0.3px #111;">-</div>
<div class="t" style="left:14.20px;top:708.08px;font-size:10px;line-height:11.50px;color:#111;font-weight:bold;">février 2022</div>
<div class="t" style="left:100.48px;top:708.08px;font-size:10px;line-height:11.50px;color:#111;-webkit-text-stroke:0.35px #111;transform:scaleX(0.912);transform-origin:0 0;">434KC01</div>
<div class="t" style="left:168.17px;top:706.22px;font-size:10.5px;line-height:12.07px;color:#111;-webkit-text-stroke:0.3px #111;">290 000 F</div>
<div class="t" style="left:246.09px;top:706.22px;font-size:10.5px;line-height:12.07px;color:#111;-webkit-text-stroke:0.3px #111;">70 000 F</div>
<div class="t" style="left:323.59px;top:706.22px;font-size:10.5px;line-height:12.07px;color:#111;-webkit-text-stroke:0.3px #111;">45 500 F</div>
<div class="t" style="left:397.67px;top:706.22px;font-size:10.5px;line-height:12.07px;color:#111;-webkit-text-stroke:0.3px #111;">244 500 F</div>
<div class="t" style="left:498.16px;top:706.22px;font-size:10.5px;line-height:12.07px;color:#111;-webkit-text-stroke:0.3px #111;">20</div>
<div class="t" style="left:592.66px;top:706.22px;font-size:10.5px;line-height:12.07px;color:#111;-webkit-text-stroke:0.3px #111;">18</div>
<div class="t" style="left:674.49px;top:706.22px;font-size:10.5px;line-height:12.07px;color:#428d31;-webkit-text-stroke:0.3px #428d31;">90%</div>
<div class="t" style="left:747.48px;top:706.22px;font-size:10.5px;line-height:12.07px;color:#a81d26;-webkit-text-stroke:0.3px #a81d26;">16 112 F</div>
<div class="t" style="left:842.51px;top:706.22px;font-size:10.5px;line-height:12.07px;color:#428d31;-webkit-text-stroke:0.3px #428d31;">2 528 F</div>
<div class="t" style="left:931.59px;top:706.22px;font-size:10.5px;line-height:12.07px;color:#111;-webkit-text-stroke:0.3px #111;">13 584 F</div>
<div class="t" style="left:14.20px;top:725.98px;font-size:10px;line-height:11.50px;color:#111;font-weight:bold;">février 2022</div>
<div class="t" style="left:97.98px;top:725.98px;font-size:10px;line-height:11.50px;color:#111;-webkit-text-stroke:0.35px #111;transform:scaleX(0.921);transform-origin:0 0;">5594KA01</div>
<div class="t" style="left:168.17px;top:724.12px;font-size:10.5px;line-height:12.07px;color:#111;-webkit-text-stroke:0.3px #111;">335 000 F</div>
<div class="t" style="left:258.82px;top:724.12px;font-size:10.5px;line-height:12.07px;color:#111;-webkit-text-stroke:0.3px #111;">0 F</div>
<div class="t" style="left:323.59px;top:724.12px;font-size:10.5px;line-height:12.07px;color:#111;-webkit-text-stroke:0.3px #111;">32 700 F</div>
<div class="t" style="left:397.67px;top:724.12px;font-size:10.5px;line-height:12.07px;color:#111;-webkit-text-stroke:0.3px #111;">302 300 F</div>
<div class="t" style="left:498.16px;top:724.12px;font-size:10.5px;line-height:12.07px;color:#111;-webkit-text-stroke:0.3px #111;">20</div>
<div class="t" style="left:592.66px;top:724.12px;font-size:10.5px;line-height:12.07px;color:#111;-webkit-text-stroke:0.3px #111;">17</div>
<div class="t" style="left:674.49px;top:724.12px;font-size:10.5px;line-height:12.07px;color:#111;-webkit-text-stroke:0.3px #111;">85%</div>
<div class="t" style="left:747.09px;top:724.12px;font-size:10.5px;line-height:12.07px;color:#428d31;-webkit-text-stroke:0.3px #428d31;">19 706 F</div>
<div class="t" style="left:842.51px;top:724.12px;font-size:10.5px;line-height:12.07px;color:#428d31;-webkit-text-stroke:0.3px #428d31;">1 924 F</div>
<div class="t" style="left:931.59px;top:724.12px;font-size:10.5px;line-height:12.07px;color:#428d31;-webkit-text-stroke:0.3px #428d31;">17 782 F</div>
<div class="t" style="left:1112.70px;top:150.86px;font-size:11px;line-height:12.65px;color:#111;font-weight:bold;"># TOP 3</div>
<div class="t" style="left:1089.92px;top:170.48px;font-size:10px;line-height:11.50px;color:#fff;font-weight:bold;">Vehicule [Recette]</div>
<div class="t" style="left:1053.66px;top:188.49px;font-size:10px;line-height:11.50px;color:#111;font-weight:bold;font-style:italic;">1.</div>
<div class="t" style="left:1070.00px;top:188.49px;font-size:10px;line-height:11.50px;color:#111;-webkit-text-stroke:0.35px #111;transform:scaleX(0.932);transform-origin:0 0;">434KC01</div>
<div class="t" style="left:1142.00px;top:188.49px;font-size:10px;line-height:11.50px;color:#111;-webkit-text-stroke:0.3px #111;">4069000 F</div>
<div class="t" style="left:1053.66px;top:206.39px;font-size:10px;line-height:11.50px;color:#111;font-weight:bold;font-style:italic;">2.</div>
<div class="t" style="left:1070.00px;top:206.39px;font-size:10px;line-height:11.50px;color:#111;-webkit-text-stroke:0.35px #111;transform:scaleX(0.942);transform-origin:0 0;">5594KA01</div>
<div class="t" style="left:1142.00px;top:206.39px;font-size:10px;line-height:11.50px;color:#111;-webkit-text-stroke:0.3px #111;">3895000 F</div>
<div class="t" style="left:1083.82px;top:242.08px;font-size:10px;line-height:11.50px;color:#fff;font-weight:bold;">Chauffeurs [Recette]</div>
<div class="t" style="left:1053.66px;top:260.09px;font-size:10px;line-height:11.50px;color:#111;font-weight:bold;font-style:italic;">1.</div>
<div class="t" style="left:1070.00px;top:260.09px;font-size:10px;line-height:11.50px;color:#111;-webkit-text-stroke:0.35px #111;transform:scaleX(1.095);transform-origin:0 0;">Jules</div>
<div class="t" style="left:1142.00px;top:260.09px;font-size:10px;line-height:11.50px;color:#111;-webkit-text-stroke:0.3px #111;">670000 F</div>
<div class="t" style="left:1053.66px;top:277.99px;font-size:10px;line-height:11.50px;color:#111;font-weight:bold;font-style:italic;">2.</div>
<div class="t" style="left:1070.00px;top:277.99px;font-size:10px;line-height:11.50px;color:#111;-webkit-text-stroke:0.35px #111;transform:scaleX(1.102);transform-origin:0 0;">Yossi</div>
<div class="t" style="left:1142.00px;top:277.99px;font-size:10px;line-height:11.50px;color:#111;-webkit-text-stroke:0.3px #111;">452000 F</div>
<div class="t" style="left:1053.66px;top:295.88px;font-size:10px;line-height:11.50px;color:#111;font-weight:bold;font-style:italic;">3.</div>
<div class="t" style="left:1070.00px;top:295.88px;font-size:10px;line-height:11.50px;color:#111;-webkit-text-stroke:0.35px #111;transform:scaleX(1.109);transform-origin:0 0;">Ulrich</div>
<div class="t" style="left:1142.00px;top:295.88px;font-size:10px;line-height:11.50px;color:#111;-webkit-text-stroke:0.3px #111;">20000 F</div>
<div class="t" style="left:1076.31px;top:313.69px;font-size:10px;line-height:11.50px;color:#fff;font-weight:bold;">Vehicule/Ent. [Dépense]</div>
<div class="t" style="left:1053.66px;top:331.69px;font-size:10px;line-height:11.50px;color:#111;font-weight:bold;font-style:italic;">1.</div>
<div class="t" style="left:1070.00px;top:331.69px;font-size:10px;line-height:11.50px;color:#111;-webkit-text-stroke:0.35px #111;transform:scaleX(0.932);transform-origin:0 0;">434KC01</div>
<div class="t" style="left:1142.00px;top:331.69px;font-size:10px;line-height:11.50px;color:#111;-webkit-text-stroke:0.3px #111;">1286400 F</div>
<div class="t" style="left:1053.66px;top:349.59px;font-size:10px;line-height:11.50px;color:#111;font-weight:bold;font-style:italic;">2.</div>
<div class="t" style="left:1070.00px;top:349.59px;font-size:10px;line-height:11.50px;color:#111;-webkit-text-stroke:0.35px #111;transform:scaleX(0.942);transform-origin:0 0;">5594KA01</div>
<div class="t" style="left:1142.00px;top:349.59px;font-size:10px;line-height:11.50px;color:#111;-webkit-text-stroke:0.3px #111;">1215433 F</div>
<div class="t" style="left:1053.66px;top:367.49px;font-size:10px;line-height:11.50px;color:#111;font-weight:bold;font-style:italic;">3.</div>
<div class="t" style="left:1070.00px;top:367.49px;font-size:10px;line-height:11.50px;color:#111;-webkit-text-stroke:0.35px #111;transform:scaleX(1.054);transform-origin:0 0;">Gérant</div>
<div class="t" style="left:1142.00px;top:367.49px;font-size:10px;line-height:11.50px;color:#111;-webkit-text-stroke:0.3px #111;">953000 F</div>
<div class="t" style="left:1072.98px;top:385.28px;font-size:10px;line-height:11.50px;color:#fff;font-weight:bold;">Fournisseurs [Dépenses]</div>
<div class="t" style="left:1053.66px;top:403.29px;font-size:10px;line-height:11.50px;color:#111;font-weight:bold;font-style:italic;">1.</div>
<div class="t" style="left:1070.00px;top:403.29px;font-size:10px;line-height:11.50px;color:#111;-webkit-text-stroke:0.35px #111;transform:scaleX(1.077);transform-origin:0 0;">Yverson</div>
<div class="t" style="left:1142.00px;top:403.29px;font-size:10px;line-height:11.50px;color:#111;-webkit-text-stroke:0.3px #111;">1105000 F</div>
<div class="t" style="left:1053.66px;top:421.19px;font-size:10px;line-height:11.50px;color:#111;font-weight:bold;font-style:italic;">2.</div>
<div class="t" style="left:1070.00px;top:421.19px;font-size:10px;line-height:11.50px;color:#111;-webkit-text-stroke:0.35px #111;transform:scaleX(1.079);transform-origin:0 0;">Autre vendeur</div>
<div class="t" style="left:1142.00px;top:421.19px;font-size:10px;line-height:11.50px;color:#111;-webkit-text-stroke:0.3px #111;">504500 F</div>
<div class="t" style="left:1053.66px;top:439.09px;font-size:10px;line-height:11.50px;color:#111;font-weight:bold;font-style:italic;">3.</div>
<div class="t" style="left:1070.00px;top:439.09px;font-size:10px;line-height:11.50px;color:#111;-webkit-text-stroke:0.35px #111;transform:scaleX(1.088);transform-origin:0 0;">Baloon</div>
<div class="t" style="left:1142.00px;top:439.09px;font-size:10px;line-height:11.50px;color:#111;-webkit-text-stroke:0.3px #111;">441250 F</div>
<div class="t" style="left:1087.23px;top:456.88px;font-size:10px;line-height:11.50px;color:#fff;font-weight:bold;">Types de dépenses</div>
<div class="t" style="left:1053.66px;top:474.88px;font-size:10px;line-height:11.50px;color:#111;font-weight:bold;font-style:italic;">1.</div>
<div class="t" style="left:1070.00px;top:474.88px;font-size:10px;line-height:11.50px;color:#111;-webkit-text-stroke:0.35px #111;transform:scaleX(1.054);transform-origin:0 0;">Salaire</div>
<div class="t" style="left:1142.00px;top:474.88px;font-size:10px;line-height:11.50px;color:#111;-webkit-text-stroke:0.3px #111;">963500 F</div>
<div class="t" style="left:1053.66px;top:492.79px;font-size:10px;line-height:11.50px;color:#111;font-weight:bold;font-style:italic;">2.</div>
<div class="t" style="left:1070.00px;top:492.79px;font-size:10px;line-height:11.50px;color:#111;-webkit-text-stroke:0.35px #111;transform:scaleX(1.082);transform-origin:0 0;">Assurance</div>
<div class="t" style="left:1142.00px;top:492.79px;font-size:10px;line-height:11.50px;color:#111;-webkit-text-stroke:0.3px #111;">441250 F</div>
<div class="t" style="left:1053.66px;top:510.69px;font-size:10px;line-height:11.50px;color:#111;font-weight:bold;font-style:italic;">3.</div>
<div class="t" style="left:1070.00px;top:510.69px;font-size:10px;line-height:11.50px;color:#111;-webkit-text-stroke:0.35px #111;transform:scaleX(1.057);transform-origin:0 0;">Mécanique</div>
<div class="t" style="left:1142.00px;top:510.69px;font-size:10px;line-height:11.50px;color:#111;-webkit-text-stroke:0.3px #111;">401500 F</div>
<div class="t" style="left:1076.87px;top:528.49px;font-size:10px;line-height:11.50px;color:#fff;font-weight:bold;">Vehicule [Dist. Parcour]</div>
<div class="t" style="left:1053.66px;top:546.48px;font-size:10px;line-height:11.50px;color:#111;font-weight:bold;font-style:italic;">1.</div>
<div class="t" style="left:1070.00px;top:546.48px;font-size:10px;line-height:11.50px;color:#111;-webkit-text-stroke:0.35px #111;transform:scaleX(0.942);transform-origin:0 0;">5594KA01</div>
<div class="t" style="left:1142.00px;top:546.48px;font-size:10px;line-height:11.50px;color:#111;-webkit-text-stroke:0.3px #111;">1512 Km</div>
<div class="t" style="left:1053.66px;top:564.38px;font-size:10px;line-height:11.50px;color:#111;font-weight:bold;font-style:italic;">2.</div>
<div class="t" style="left:1070.00px;top:564.38px;font-size:10px;line-height:11.50px;color:#111;-webkit-text-stroke:0.35px #111;transform:scaleX(0.932);transform-origin:0 0;">434KC01</div>
<div class="t" style="left:1142.00px;top:564.38px;font-size:10px;line-height:11.50px;color:#111;-webkit-text-stroke:0.3px #111;">1355 Km</div>
</body></html>
